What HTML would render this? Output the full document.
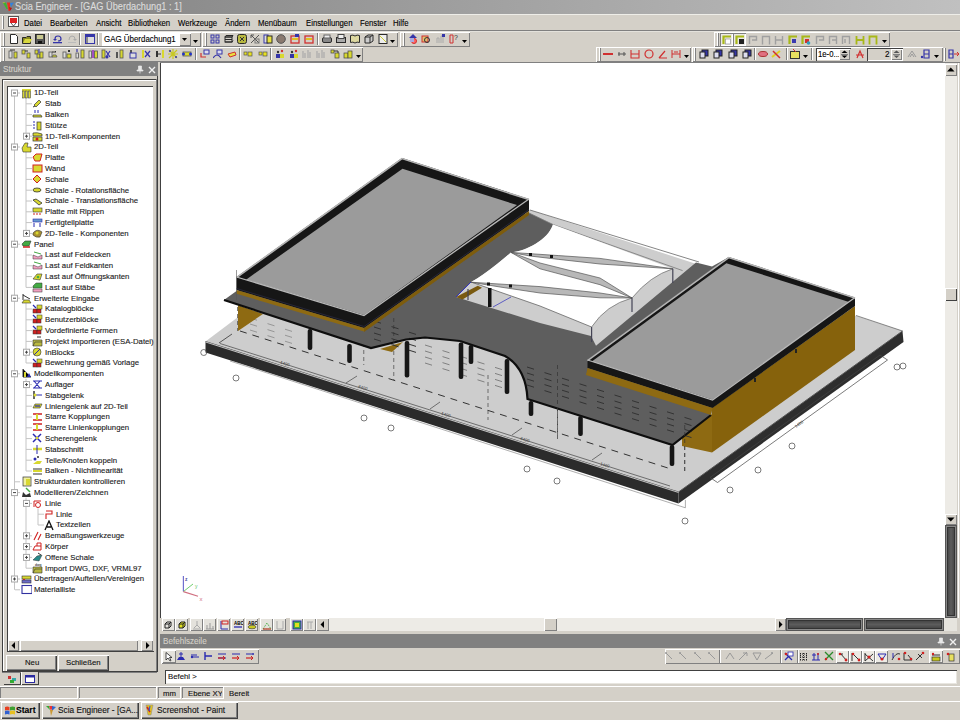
<!DOCTYPE html><html><head><meta charset="utf-8"><style>
html,body{margin:0;padding:0;}
body{width:960px;height:720px;overflow:hidden;position:relative;background:#d4d0c8;font-family:"Liberation Sans",sans-serif;}
div{position:absolute;box-sizing:border-box;}
.t{white-space:nowrap;transform-origin:0 0;line-height:1;-webkit-text-stroke:0.12px currentColor;}
svg{position:absolute;}
</style></head><body>

<div style="left:0px;top:0px;width:960px;height:14px;background:linear-gradient(90deg,#808080 0%,#9a9a9a 40%,#c0c0c0 100%)"></div>
<div class="t" style="left:15px;top:2px;font-size:10px;color:#dcdcdc;transform:scaleX(0.92);">Scia Engineer - [GAG &Uuml;berdachung1 : 1]</div>
<svg style="left:1px;top:1px" width="14" height="12"><path d="M1.5 1.5 L4 1.5 L4 4 Z" fill="#f0d020"/><path d="M2 2 L5 1.5 L7 8 L5.5 8Z" fill="#40b030"/><path d="M6 1.5 L9 1.5 L9 10 L7.5 10 Z" fill="#e83020"/><path d="M9 2 L13 1.5 L10 6Z" fill="#3080e0"/><path d="M8 6 L11 7 L9 10Z" fill="#c01010"/></svg>
<div style="left:0px;top:14px;width:960px;height:1px;background:#eeede8"></div>
<div style="left:0px;top:30px;width:960px;height:1px;background:#808080"></div>
<div style="left:0px;top:31px;width:960px;height:1px;background:#e4e2dc"></div>
<div style="left:2px;top:16px;width:1px;height:13px;background:#fff"></div>
<div style="left:3px;top:16px;width:1px;height:13px;background:#808080"></div>
<svg style="left:7px;top:15px" width="14" height="14"><rect x="1.5" y="1.5" width="10" height="10" fill="#fff" stroke="#555"/><rect x="3" y="3" width="7" height="5" fill="#d22"/><path d="M4 8 L6.5 11 L9 8" fill="#fff" stroke="#555"/></svg>
<div class="t" style="left:24px;top:18.5px;font-size:9px;color:#000;transform:scaleX(0.86);">Datei</div>
<div class="t" style="left:50px;top:18.5px;font-size:9px;color:#000;transform:scaleX(0.86);">Bearbeiten</div>
<div class="t" style="left:95.5px;top:18.5px;font-size:9px;color:#000;transform:scaleX(0.86);">Ansicht</div>
<div class="t" style="left:128px;top:18.5px;font-size:9px;color:#000;transform:scaleX(0.86);">Bibliotheken</div>
<div class="t" style="left:178px;top:18.5px;font-size:9px;color:#000;transform:scaleX(0.86);">Werkzeuge</div>
<div class="t" style="left:225px;top:18.5px;font-size:9px;color:#000;transform:scaleX(0.86);">&Auml;ndern</div>
<div class="t" style="left:258px;top:18.5px;font-size:9px;color:#000;transform:scaleX(0.86);">Men&uuml;baum</div>
<div class="t" style="left:306px;top:18.5px;font-size:9px;color:#000;transform:scaleX(0.86);">Einstellungen</div>
<div class="t" style="left:360px;top:18.5px;font-size:9px;color:#000;transform:scaleX(0.86);">Fenster</div>
<div class="t" style="left:393px;top:18.5px;font-size:9px;color:#000;transform:scaleX(0.86);">Hilfe</div>
<div style="left:0px;top:32px;width:201px;height:15px;box-shadow:inset 1px 1px 0 #fff, inset -1px -1px 0 #808080"></div>
<div style="left:3px;top:33px;width:1px;height:13px;background:#fff"></div>
<div style="left:4px;top:33px;width:1px;height:13px;background:#808080"></div>
<svg style="left:9px;top:34px" width="10" height="10" viewBox="0 0 10 10"><path d="M1.5 .5 H6.5 L8.5 2.5 V9.5 H1.5Z" fill="#fff" stroke="#2a2a2a"/></svg>
<svg style="left:22px;top:34px" width="10" height="10" viewBox="0 0 10 10"><path d="M.5 3.5 H4 L5 2.5 H8.5 V9.5 H.5Z" fill="#8a8a20" stroke="#2a2a2a"/><path d="M1 9 L3 5 H10 L8 9Z" fill="#d8d840"/></svg>
<svg style="left:35px;top:34px" width="10" height="10" viewBox="0 0 10 10"><rect x=".5" y=".5" width="9" height="9" fill="#555" stroke="#2a2a2a"/><rect x="2" y="1" width="6" height="4" fill="#c8c890"/><rect x="3" y="7" width="4" height="2.5" fill="#111"/></svg>
<svg style="left:53px;top:34px" width="10" height="10" viewBox="0 0 10 10"><path d="M2 5 Q2 2 5 2 Q8 2 8 5 Q8 7 5 7" fill="none" stroke="#3535a8" stroke-width="1.2"/><path d="M0 5 H4 L2 7Z" fill="#3535a8"/><rect x="0" y="8" width="9" height="1.3" fill="#3535a8"/></svg>
<svg style="left:67px;top:34px" width="10" height="10" viewBox="0 0 10 10"><path d="M2 6 Q2 2 5 2 Q8 2 8 5" fill="none" stroke="#aaa" stroke-width="1"/><path d="M6 5 H10 L8 7Z" fill="#aaa"/><rect x="1" y="8" width="8" height="1" fill="#bbb"/></svg>
<svg style="left:85px;top:34px" width="10" height="10" viewBox="0 0 10 10"><rect x=".5" y=".5" width="9" height="9" fill="#ddd" stroke="#3535a8"/><rect x="1" y="1" width="8" height="2" fill="#3535a8"/><rect x="1" y="3" width="2" height="6" fill="#888"/></svg>
<div style="left:48px;top:33px;width:1px;height:12px;background:#808080"></div>
<div style="left:49px;top:33px;width:1px;height:12px;background:#fff"></div>
<div style="left:79px;top:33px;width:1px;height:12px;background:#808080"></div>
<div style="left:80px;top:33px;width:1px;height:12px;background:#fff"></div>
<div style="left:97px;top:33px;width:1px;height:12px;background:#808080"></div>
<div style="left:98px;top:33px;width:1px;height:12px;background:#fff"></div>
<div style="left:102px;top:33px;width:89px;height:13px;background:#fff"></div>
<div style="left:179px;top:33px;width:12px;height:13px;background:#d4d0c8;box-shadow:inset 1px 1px 0 #fff, inset -1px -1px 0 #808080"></div>
<svg style="left:182px;top:38px" width="6" height="4" viewBox="0 0 6 4"><path d="M0 0 H5 L2.5 3Z" fill="#000"/></svg>
<div class="t" style="left:104px;top:35px;font-size:9px;color:#000;transform:scaleX(0.88);">GAG &Uuml;berdachung1</div>
<svg style="left:193px;top:40px" width="6" height="4" viewBox="0 0 6 4"><path d="M0 0 H5 L2.5 3Z" fill="#000"/></svg>
<div style="left:202px;top:32px;width:196px;height:15px;box-shadow:inset 1px 1px 0 #fff, inset -1px -1px 0 #808080"></div>
<div style="left:205px;top:33px;width:1px;height:13px;background:#fff"></div>
<div style="left:206px;top:33px;width:1px;height:13px;background:#808080"></div>
<svg style="left:210px;top:34px" width="10" height="10" viewBox="0 0 10 10"><rect x="1" y="1" width="3" height="3" fill="none" stroke="#3535a8"/><rect x="6" y="1" width="3" height="3" fill="none" stroke="#3535a8"/><rect x="1" y="6" width="3" height="3" fill="none" stroke="#3535a8"/><rect x="6" y="6" width="3" height="3" fill="none" stroke="#3535a8"/></svg>
<svg style="left:224px;top:34px" width="10" height="10" viewBox="0 0 10 10"><path d="M1 3 H8 L9 1.5 H2Z M1 5.5 H8 M1 8 H8 L9 6.5" fill="none" stroke="#2a2a2a"/><rect x="1" y="3" width="7" height="5" fill="none" stroke="#2a2a2a"/></svg>
<svg style="left:237px;top:34px" width="10" height="10" viewBox="0 0 10 10"><rect x=".5" y=".5" width="9" height="9" rx="2" fill="#b8b840" stroke="#2a2a2a"/><path d="M3 3 L7 7 M7 3 L3 7" stroke="#333"/></svg>
<svg style="left:250px;top:34px" width="10" height="10" viewBox="0 0 10 10"><path d="M1 1 L9 9 M9 1 L1 9 M1 1 H4 M1 1 V4" fill="none" stroke="#555"/><rect x="5" y="5" width="4" height="4" fill="none" stroke="#777"/></svg>
<svg style="left:263px;top:34px" width="10" height="10" viewBox="0 0 10 10"><rect x="1" y="1" width="4" height="8" fill="#ddd" stroke="#3535a8"/><rect x="4" y="2" width="5" height="7" fill="#e8e040" stroke="#2a2a2a"/></svg>
<svg style="left:276px;top:34px" width="10" height="10" viewBox="0 0 10 10"><circle cx="5" cy="5" r="4.3" fill="#8a7a70" stroke="#555"/></svg>
<svg style="left:290px;top:34px" width="10" height="10" viewBox="0 0 10 10"><rect x="1" y="2" width="8" height="7" fill="none" stroke="#d03030" stroke-width="1.3"/><rect x="2" y="4" width="6" height="2" fill="#e0c020"/><rect x="5" y="0" width="4" height="3" fill="#3535a8"/></svg>
<svg style="left:304px;top:34px" width="10" height="10" viewBox="0 0 10 10"><rect x="1" y="2" width="8" height="7" fill="none" stroke="#d03030" stroke-width="1.3"/><rect x="2" y="4" width="6" height="2" fill="#e0c020"/></svg>
<svg style="left:322px;top:34px" width="10" height="10" viewBox="0 0 10 10"><rect x=".5" y="3.5" width="9" height="5" rx="1.5" fill="#888" stroke="#2a2a2a"/><rect x="2" y="1" width="6" height="3" fill="#eee" stroke="#666"/></svg>
<svg style="left:336px;top:34px" width="10" height="10" viewBox="0 0 10 10"><rect x=".5" y="3.5" width="9" height="5" fill="#aaa" stroke="#2a2a2a"/><rect x="2" y=".5" width="6" height="4" fill="#eee" stroke="#444"/></svg>
<svg style="left:350px;top:34px" width="10" height="10" viewBox="0 0 10 10"><path d="M.5 1.5 Q3 .5 5 2 Q7 .5 9.5 1.5 V8.5 Q7 7.5 5 9 Q3 7.5 .5 8.5Z" fill="#ddd8a0" stroke="#2a2a2a"/></svg>
<svg style="left:364px;top:34px" width="10" height="10" viewBox="0 0 10 10"><path d="M1 3 L4 1 H9 V7 L6 9 H1Z" fill="#ccc" stroke="#2a2a2a"/><path d="M1 3 H6 V9 M6 3 L9 1" fill="none" stroke="#2a2a2a"/></svg>
<svg style="left:378px;top:34px" width="10" height="10" viewBox="0 0 10 10"><rect x="1" y=".5" width="8" height="9" fill="#eee" stroke="#2a2a2a"/><path d="M2 2 L8 8" stroke="#cc3"/></svg>
<div style="left:317px;top:33px;width:1px;height:12px;background:#808080"></div>
<div style="left:318px;top:33px;width:1px;height:12px;background:#fff"></div>
<svg style="left:390px;top:40px" width="6" height="4" viewBox="0 0 6 4"><path d="M0 0 H5 L2.5 3Z" fill="#000"/></svg>
<div style="left:400px;top:32px;width:70px;height:15px;box-shadow:inset 1px 1px 0 #fff, inset -1px -1px 0 #808080"></div>
<div style="left:403px;top:33px;width:1px;height:13px;background:#fff"></div>
<div style="left:404px;top:33px;width:1px;height:13px;background:#808080"></div>
<svg style="left:408px;top:34px" width="10" height="10" viewBox="0 0 10 10"><path d="M5 0 L9 4 H1Z" fill="#3535a8"/><circle cx="6" cy="7" r="2.5" fill="#f66" stroke="#d03030"/><rect x="2" y="4" width="4" height="4" fill="#aad"/></svg>
<svg style="left:421px;top:34px" width="10" height="10" viewBox="0 0 10 10"><rect x="1" y="2" width="6" height="6" fill="#e0c070" stroke="#d03030"/><circle cx="6" cy="6" r="2.5" fill="none" stroke="#333"/></svg>
<svg style="left:436px;top:34px" width="10" height="10" viewBox="0 0 10 10"><path d="M1 9 V4 H3 V9 M5 9 V2 H7 V9" fill="none" stroke="#aaa"/><rect x="6" y="0" width="3" height="3" fill="#3535a8"/></svg>
<svg style="left:449px;top:34px" width="10" height="10" viewBox="0 0 10 10"><path d="M1 1 V9 H4 V1Z" fill="none" stroke="#d03030"/><text x="5" y="6" font-size="7" fill="#333" font-family="Liberation Sans">?</text></svg>
<svg style="left:462px;top:40px" width="6" height="4" viewBox="0 0 6 4"><path d="M0 0 H5 L2.5 3Z" fill="#000"/></svg>
<div style="left:714px;top:32px;width:176px;height:15px;box-shadow:inset 1px 1px 0 #fff, inset -1px -1px 0 #808080"></div>
<div style="left:717px;top:33px;width:1px;height:13px;background:#fff"></div>
<div style="left:718px;top:33px;width:1px;height:13px;background:#808080"></div>
<div style="left:720px;top:33px;width:13px;height:13px;background:#eceae4;box-shadow:inset 1px 1px 0 #808080, inset -1px -1px 0 #fff"></div>
<div style="left:733px;top:33px;width:13px;height:13px;background:#eceae4;box-shadow:inset 1px 1px 0 #808080, inset -1px -1px 0 #fff"></div>
<svg style="left:721.5px;top:34.5px" width="10" height="10" viewBox="0 0 10 10"><path d="M1.5 9 V1.5 H9" fill="none" stroke="#a8b818" stroke-width="2.2"/><rect x="3.5" y="4" width="5" height="5" fill="#fff" stroke="#888" stroke-width=".6"/></svg>
<svg style="left:734.5px;top:34.5px" width="10" height="10" viewBox="0 0 10 10"><path d="M1.5 9 V1.5 H9" fill="none" stroke="#a8b818" stroke-width="2.2"/><rect x="4" y="4" width="5" height="5" fill="#222"/></svg>
<svg style="left:748px;top:34.5px" width="10" height="10" viewBox="0 0 10 10"><path d="M1.5 9 V1.5 H8.5 V5 H4" fill="none" stroke="#a0a0a0" stroke-width="1.4"/></svg>
<svg style="left:761px;top:34.5px" width="10" height="10" viewBox="0 0 10 10"><path d="M1.5 9.5 V1.5 H8.5 V9.5" fill="none" stroke="#a0a0a0" stroke-width="1.4"/></svg>
<svg style="left:774px;top:34.5px" width="10" height="10" viewBox="0 0 10 10"><path d="M1.5 9.5 V1 M8.5 9.5 V1 M1.5 5 H8.5" fill="none" stroke="#a0a0a0" stroke-width="1.4"/></svg>
<svg style="left:787.5px;top:34.5px" width="10" height="10" viewBox="0 0 10 10"><path d="M1.5 9 V1.5 H9" fill="none" stroke="#a8b818" stroke-width="2.2"/><rect x="4" y="4" width="4" height="4" fill="#3a3ab0"/></svg>
<svg style="left:801px;top:34.5px" width="10" height="10" viewBox="0 0 10 10"><path d="M1.5 9 V1.5 H9" fill="none" stroke="#a8b818" stroke-width="2.2"/><rect x="4" y="4" width="4" height="4" fill="#d03030"/><circle cx="7.5" cy="8" r="1.8" fill="#30a0c0"/></svg>
<svg style="left:814.5px;top:34.5px" width="10" height="10" viewBox="0 0 10 10"><path d="M1.5 9 V1.5 H8.5 V5 H4" fill="none" stroke="#a0a0a0" stroke-width="1.4"/></svg>
<svg style="left:828px;top:34.5px" width="10" height="10" viewBox="0 0 10 10"><path d="M1.5 9 V1.5 H8.5 V9 M4 5 H8" fill="none" stroke="#a0a0a0" stroke-width="1.4"/></svg>
<svg style="left:841px;top:34.5px" width="10" height="10" viewBox="0 0 10 10"><path d="M1.5 9 V1.5 H8.5 V9 M4 4 V8" fill="none" stroke="#a0a0a0" stroke-width="1.4"/></svg>
<svg style="left:854.5px;top:34.5px" width="10" height="10" viewBox="0 0 10 10"><path d="M1.5 9.5 V1 M8.5 9.5 V1 M1.5 5 H8.5" fill="none" stroke="#a8b818" stroke-width="1.8"/></svg>
<svg style="left:868px;top:34.5px" width="10" height="10" viewBox="0 0 10 10"><path d="M1.5 9.5 V1.5 H8.5 V9.5" fill="none" stroke="#a8b818" stroke-width="1.8"/></svg>
<svg style="left:882px;top:40px" width="6" height="4" viewBox="0 0 6 4"><path d="M0 0 H5 L2.5 3Z" fill="#000"/></svg>
<div style="left:0px;top:47px;width:363px;height:15px;box-shadow:inset 1px 1px 0 #fff, inset -1px -1px 0 #808080"></div>
<div style="left:3px;top:48px;width:1px;height:13px;background:#fff"></div>
<div style="left:4px;top:48px;width:1px;height:13px;background:#808080"></div>
<svg style="left:8px;top:49px" width="10" height="10" viewBox="0 0 10 10"><rect x="1" y="2" width="3" height="7" fill="#ddd" stroke="#555" stroke-width=".8"/><rect x="6" y="3" width="3" height="6" fill="#d8d830" stroke="#555" stroke-width=".8"/><path d="M2 1 H7" stroke="#333"/></svg>
<svg style="left:21px;top:49px" width="10" height="10" viewBox="0 0 10 10"><rect x="1" y="1" width="3" height="4" fill="#d8d830" stroke="#555" stroke-width=".8"/><rect x="6" y="4" width="3" height="5" fill="#d8d830" stroke="#555" stroke-width=".8"/><path d="M4 2 H7" stroke="#333"/></svg>
<svg style="left:34px;top:49px" width="10" height="10" viewBox="0 0 10 10"><rect x="1" y="1" width="3" height="4" fill="#d8d830" stroke="#555" stroke-width=".8"/><rect x="3" y="5" width="3" height="4" fill="#d8d830" stroke="#555" stroke-width=".8"/><rect x="6" y="3" width="3" height="6" fill="#d8d830" stroke="#555" stroke-width=".8"/><path d="M5 0 V4" stroke="#3535a8"/></svg>
<svg style="left:48px;top:49px" width="10" height="10" viewBox="0 0 10 10"><rect x="1" y="3" width="3" height="5" fill="#ddd" stroke="#555" stroke-width=".8"/><path d="M4 8 H9 L8 6 H5Z" fill="#d8d830" stroke="#555" stroke-width=".8"/><path d="M4 3 H8 L7 2" fill="none" stroke="#333"/></svg>
<svg style="left:62px;top:49px" width="10" height="10" viewBox="0 0 10 10"><rect x="1" y="3" width="3" height="6" fill="#ddd" stroke="#555" stroke-width=".8"/><rect x="5" y="5" width="4" height="4" fill="#d8d830" stroke="#555" stroke-width=".8"/><path d="M6 1 L8 3 M8 1 L6 3" stroke="#333"/></svg>
<svg style="left:75px;top:49px" width="10" height="10" viewBox="0 0 10 10"><rect x="1" y="4" width="2.5" height="5" fill="#ddd" stroke="#555" stroke-width=".8"/><rect x="6" y="1" width="3" height="8" fill="#d8d830" stroke="#555" stroke-width=".8"/><path d="M2 0 V3" stroke="#3535a8" stroke-width="1.2"/></svg>
<svg style="left:88px;top:49px" width="10" height="10" viewBox="0 0 10 10"><rect x="1" y="2" width="2.5" height="7" fill="#ddd" stroke="#555" stroke-width=".8"/><rect x="4" y="1" width="2" height="8" fill="#a050c0"/><rect x="6.5" y="2" width="3" height="7" fill="#d8d830" stroke="#555" stroke-width=".8"/></svg>
<svg style="left:101px;top:49px" width="10" height="10" viewBox="0 0 10 10"><rect x="1" y="1" width="3" height="8" fill="#d8d830" stroke="#555" stroke-width=".8"/><path d="M5 2 L9 8 M9 2 L5 8" stroke="#3535a8" stroke-width="1.2"/><circle cx="6" cy="8" r="1.5" fill="#3535a8"/></svg>
<svg style="left:115px;top:49px" width="10" height="10" viewBox="0 0 10 10"><rect x="1" y="3" width="2" height="6" fill="#555"/><rect x="5" y="1" width="3" height="8" fill="#d8d830" stroke="#555" stroke-width=".8"/></svg>
<svg style="left:128px;top:49px" width="10" height="10" viewBox="0 0 10 10"><rect x="2" y="1" width="2" height="3" fill="#555"/><rect x="2" y="4" width="6" height="5" fill="#ddd" stroke="#3535a8"/></svg>
<svg style="left:141px;top:49px" width="10" height="10" viewBox="0 0 10 10"><rect x="1" y="1" width="2" height="8" fill="#d8d830"/><path d="M4 2 L9 8 M9 2 L4 8" stroke="#3535a8" stroke-width="1.2"/></svg>
<svg style="left:155px;top:49px" width="10" height="10" viewBox="0 0 10 10"><rect x="1" y="2" width="2" height="6" fill="#333"/><path d="M3 5 H6" stroke="#333"/><rect x="7" y="1" width="2" height="8" fill="#d8d830"/></svg>
<svg style="left:168px;top:49px" width="10" height="10" viewBox="0 0 10 10"><path d="M5 0 V10 M0 5 H10 M1 1 L9 9 M9 1 L1 9" stroke="#c8c820" stroke-width="1.2"/><circle cx="2" cy="2" r="1" fill="#3535a8"/><circle cx="8" cy="8" r="1" fill="#3535a8"/></svg>
<svg style="left:182px;top:49px" width="10" height="10" viewBox="0 0 10 10"><rect x="1" y="3" width="8" height="4" fill="#d8d830" stroke="#555" stroke-width=".8"/><circle cx="1.5" cy="5" r="1.5" fill="#2233cc"/><circle cx="8.5" cy="5" r="1.5" fill="#2233cc"/></svg>
<svg style="left:200px;top:49px" width="10" height="10" viewBox="0 0 10 10"><rect x="4" y="1" width="5" height="4" fill="#dde" stroke="#3535a8"/><path d="M1 4 V8 H6" fill="none" stroke="#d03030" stroke-width="1.2"/></svg>
<svg style="left:213px;top:49px" width="10" height="10" viewBox="0 0 10 10"><rect x="4" y="1" width="5" height="4" fill="#dde" stroke="#3535a8"/><path d="M0 9 Q4 3 8 9" fill="none" stroke="#3535a8" stroke-width="1.2"/></svg>
<svg style="left:227px;top:49px" width="10" height="10" viewBox="0 0 10 10"><path d="M1 5 L8 3 L9 6 L3 8Z" fill="#e8e040" stroke="#d03030"/></svg>
<svg style="left:243px;top:49px" width="10" height="10" viewBox="0 0 10 10"><rect x="1" y="3" width="3" height="3" fill="#e8e020" stroke="#555" stroke-width=".7"/><rect x="5" y="3" width="4" height="4" fill="#e8e020" stroke="#555" stroke-width=".7"/></svg>
<svg style="left:258px;top:49px" width="10" height="10" viewBox="0 0 10 10"><rect x="1" y="3" width="3" height="3" fill="#e8e020" stroke="#555" stroke-width=".7"/><rect x="5" y="3" width="4" height="4" fill="#e8e020" stroke="#555" stroke-width=".7"/></svg>
<svg style="left:275px;top:49px" width="10" height="10" viewBox="0 0 10 10"><circle cx="3" cy="3" r="1.2" fill="#333"/><circle cx="7" cy="2" r="1.2" fill="#d03030"/><rect x="1" y="5" width="4" height="4" fill="#3535a8"/><rect x="5" y="5" width="4" height="4" fill="#d8d830"/></svg>
<svg style="left:289px;top:49px" width="10" height="10" viewBox="0 0 10 10"><circle cx="3" cy="3" r="1.2" fill="#333"/><circle cx="7" cy="2" r="1.2" fill="#d03030"/><rect x="1" y="5" width="4" height="4" fill="#3535a8"/><rect x="5" y="5" width="4" height="4" fill="#d8d830"/></svg>
<svg style="left:302px;top:49px" width="10" height="10" viewBox="0 0 10 10"><path d="M1 2 V9 M3 4 V9 M6 1 V9 M8 3 V9" stroke="#aaa" stroke-width="1.2"/></svg>
<svg style="left:316px;top:49px" width="10" height="10" viewBox="0 0 10 10"><path d="M1 2 V9 M3 4 V9 M6 1 V9 M8 3 V9" stroke="#aaa" stroke-width="1.2"/></svg>
<svg style="left:330px;top:49px" width="10" height="10" viewBox="0 0 10 10"><rect x="1" y="1" width="3" height="3" fill="#d8d830" stroke="#444" stroke-width=".7"/><rect x="5" y="4" width="4" height="5" fill="#d8d830" stroke="#444" stroke-width=".7"/><path d="M4 2 H8 V4" fill="none" stroke="#333"/></svg>
<svg style="left:343px;top:49px" width="10" height="10" viewBox="0 0 10 10"><rect x="1" y="4" width="4" height="5" fill="#d8d830" stroke="#444" stroke-width=".7"/><rect x="5" y="2" width="4" height="7" fill="#d8d830" stroke="#444" stroke-width=".7"/></svg>
<div style="left:195px;top:48px;width:1px;height:12px;background:#808080"></div>
<div style="left:196px;top:48px;width:1px;height:12px;background:#fff"></div>
<div style="left:239px;top:48px;width:1px;height:12px;background:#808080"></div>
<div style="left:240px;top:48px;width:1px;height:12px;background:#fff"></div>
<div style="left:270px;top:48px;width:1px;height:12px;background:#808080"></div>
<div style="left:271px;top:48px;width:1px;height:12px;background:#fff"></div>
<svg style="left:356px;top:55px" width="6" height="4" viewBox="0 0 6 4"><path d="M0 0 H5 L2.5 3Z" fill="#000"/></svg>
<div style="left:596px;top:47px;width:95px;height:15px;box-shadow:inset 1px 1px 0 #fff, inset -1px -1px 0 #808080"></div>
<div style="left:599px;top:48px;width:1px;height:13px;background:#fff"></div>
<div style="left:600px;top:48px;width:1px;height:13px;background:#808080"></div>
<svg style="left:603px;top:49px" width="10" height="10" viewBox="0 0 10 10"><rect x="0" y="4" width="10" height="2" fill="#d03030"/></svg>
<svg style="left:617px;top:49px" width="10" height="10" viewBox="0 0 10 10"><path d="M1 5 H9 M2 3 V7 M7 3 V7" stroke="#555"/></svg>
<svg style="left:630px;top:49px" width="10" height="10" viewBox="0 0 10 10"><path d="M1 1 V9 H9 V1 M1 5 H9" fill="none" stroke="#d03030" stroke-width="1.1"/></svg>
<svg style="left:644px;top:49px" width="10" height="10" viewBox="0 0 10 10"><circle cx="5" cy="5" r="4" fill="none" stroke="#d03030" stroke-width="1.2"/></svg>
<svg style="left:658px;top:49px" width="10" height="10" viewBox="0 0 10 10"><path d="M1 9 H9 M1 9 L7 2" fill="none" stroke="#d03030" stroke-width="1.2"/></svg>
<svg style="left:671px;top:49px" width="10" height="10" viewBox="0 0 10 10"><path d="M1 1 V9 M9 1 V9 M1 5 H9 M3 3 H7" fill="none" stroke="#d03030"/></svg>
<svg style="left:684px;top:55px" width="6" height="4" viewBox="0 0 6 4"><path d="M0 0 H5 L2.5 3Z" fill="#000"/></svg>
<div style="left:692px;top:47px;width:251px;height:15px;box-shadow:inset 1px 1px 0 #fff, inset -1px -1px 0 #808080"></div>
<div style="left:694px;top:48px;width:1px;height:13px;background:#fff"></div>
<div style="left:695px;top:48px;width:1px;height:13px;background:#808080"></div>
<svg style="left:699px;top:49px" width="10" height="10" viewBox="0 0 10 10"><rect x="3" y="1" width="6" height="6" fill="#3535a8" stroke="#222"/><rect x="1" y="3" width="5" height="6" fill="#dde" stroke="#222"/></svg>
<svg style="left:713px;top:49px" width="10" height="10" viewBox="0 0 10 10"><rect x="3" y="1" width="6" height="6" fill="#3535a8" stroke="#222"/><rect x="1" y="3" width="5" height="6" fill="#dde" stroke="#222"/></svg>
<svg style="left:728px;top:49px" width="10" height="10" viewBox="0 0 10 10"><rect x="3" y="1" width="6" height="6" fill="#3535a8" stroke="#222"/><rect x="1" y="3" width="5" height="6" fill="#dde" stroke="#222"/></svg>
<svg style="left:742px;top:49px" width="10" height="10" viewBox="0 0 10 10"><rect x="3" y="1" width="6" height="6" fill="#3535a8" stroke="#222"/><rect x="1" y="3" width="5" height="6" fill="#dde" stroke="#222"/></svg>
<svg style="left:758px;top:49px" width="10" height="10" viewBox="0 0 10 10"><ellipse cx="5" cy="5" rx="4.5" ry="2.5" fill="#e07080" stroke="#a33"/></svg>
<svg style="left:771px;top:49px" width="10" height="10" viewBox="0 0 10 10"><path d="M1 8 L9 2" stroke="#e0d020" stroke-width="2"/><path d="M2 2 L9 9" stroke="#d03030" stroke-width="1.5"/></svg>
<svg style="left:790px;top:49px" width="10" height="10" viewBox="0 0 10 10"><rect x=".5" y="2.5" width="9" height="7" fill="#e8e060" stroke="#333"/><path d="M3 0 L6 3" stroke="#d03030"/></svg>
<div style="left:754px;top:48px;width:1px;height:12px;background:#808080"></div>
<div style="left:755px;top:48px;width:1px;height:12px;background:#fff"></div>
<div style="left:786px;top:48px;width:1px;height:12px;background:#808080"></div>
<div style="left:787px;top:48px;width:1px;height:12px;background:#fff"></div>
<div style="left:811px;top:48px;width:1px;height:12px;background:#808080"></div>
<div style="left:812px;top:48px;width:1px;height:12px;background:#fff"></div>
<svg style="left:803px;top:55px" width="6" height="4" viewBox="0 0 6 4"><path d="M0 0 H5 L2.5 3Z" fill="#000"/></svg>
<div style="left:816px;top:48px;width:35px;height:13px;background:#fff;box-shadow:inset 1px 1px 0 #404040, inset -1px -1px 0 #d4d0c8"></div>
<div class="t" style="left:818px;top:50px;font-size:9px;color:#000;transform:scaleX(0.86);">1e-0...</div>
<div style="left:839px;top:49px;width:11px;height:11px;background:#d4d0c8;box-shadow:inset 1px 1px 0 #fff, inset -1px -1px 0 #808080"></div>
<svg style="left:841px;top:50px" width="7" height="9" viewBox="0 0 7 9"><path d="M.5 3 L3.5 .5 L6.5 3Z M.5 5.5 L3.5 8 L6.5 5.5Z" fill="#000"/><rect x="0" y="4" width="7" height="1" fill="#808080"/></svg>
<svg style="left:855px;top:49px" width="10" height="10" viewBox="0 0 10 10"><path d="M2 9 L5 2 L8 9 M1 6 H9" fill="none" stroke="#d03030" stroke-width="1.2"/></svg>
<div style="left:867px;top:48px;width:36px;height:13px;background:#d4d0c8;box-shadow:inset 1px 1px 0 #404040, inset -1px -1px 0 #fff"></div>
<div class="t" style="left:885px;top:50px;font-size:9px;color:#000;transform:scaleX(0.9);">2</div>
<div style="left:891px;top:49px;width:11px;height:11px;background:#d4d0c8;box-shadow:inset 1px 1px 0 #fff, inset -1px -1px 0 #808080"></div>
<svg style="left:893px;top:50px" width="7" height="9" viewBox="0 0 7 9"><path d="M.5 3 L3.5 .5 L6.5 3Z M.5 5.5 L3.5 8 L6.5 5.5Z" fill="#555"/><rect x="0" y="4" width="7" height="1" fill="#808080"/></svg>
<svg style="left:907px;top:49px" width="10" height="10" viewBox="0 0 10 10"><path d="M1 8 L5 2 L9 8 M3 8 L5 5 L7 8" fill="none" stroke="#999"/></svg>
<svg style="left:920px;top:49px" width="10" height="10" viewBox="0 0 10 10"><path d="M4 1 H9 V9 H4Z M4 5 H9" fill="none" stroke="#3535a8" stroke-width="1.2"/><circle cx="2" cy="8" r="1.2" fill="#3535a8"/></svg>
<svg style="left:934px;top:55px" width="6" height="4" viewBox="0 0 6 4"><path d="M0 0 H5 L2.5 3Z" fill="#000"/></svg>
<div style="left:944px;top:48px;width:1px;height:13px;background:#fff"></div>
<div style="left:945px;top:48px;width:1px;height:13px;background:#808080"></div>
<svg style="left:948px;top:49px" width="12" height="10" viewBox="0 0 12 10"><path d="M1 1 H5 V9 H1Z M1 5 H5" fill="none" stroke="#3535a8" stroke-width="1.2"/><path d="M6 5 H11 M9 3 L11 5 L9 7" fill="none" stroke="#d03030"/></svg>
<div style="left:0px;top:62px;width:960px;height:1px;background:#808080"></div>
<div style="left:0px;top:62px;width:158px;height:14px;background:#808080"></div>
<div class="t" style="left:3px;top:65px;font-size:9px;color:#d4d0c8;transform:scaleX(0.9);">Struktur</div>
<svg style="left:136px;top:65px" width="8" height="9" viewBox="0 0 8 9"><path d="M2.5 1 H5.5 V5 H7 V6 H1 V5 H2.5Z M4 6 V8.5" fill="#e8e8e8" stroke="#e8e8e8" stroke-width=".7"/></svg>
<svg style="left:148px;top:66px" width="8" height="8" viewBox="0 0 8 8"><path d="M1 1 L7 7 M7 1 L1 7" stroke="#f0f0f0" stroke-width="1.4"/></svg>
<div style="left:157px;top:76px;width:1px;height:596px;background:#404040"></div>
<div style="left:158px;top:62px;width:2px;height:610px;background:#d4d0c8"></div>
<div style="left:2px;top:79px;width:154px;height:593px;box-shadow:inset 1px 1px 0 #404040, inset 2px 2px 0 #fff"></div>
<div style="left:156px;top:79px;width:1px;height:593px;background:#808080"></div>
<div style="left:2px;top:671px;width:155px;height:1px;background:#404040"></div>
<div style="left:7px;top:86px;width:147px;height:566px;background:#fff;box-shadow:inset 1px 1px 0 #404040"></div>
<div style="left:153px;top:86px;width:1px;height:566px;background:#d4d0c8"></div>
<svg style="left:0;top:0" width="160" height="680">
<path d="M14.5 96.0 V589.8" stroke="#c4c4c4" stroke-width="1"/>
<path d="M15 93.0 H20" stroke="#c4c4c4"/>
<path d="M15 147.0 H20" stroke="#c4c4c4"/>
<path d="M15 244.2 H20" stroke="#c4c4c4"/>
<path d="M15 298.2 H20" stroke="#c4c4c4"/>
<path d="M15 373.8 H20" stroke="#c4c4c4"/>
<path d="M15 481.8 H20" stroke="#c4c4c4"/>
<path d="M15 492.6 H20" stroke="#c4c4c4"/>
<path d="M15 579.0 H20" stroke="#c4c4c4"/>
<path d="M15 589.8 H20" stroke="#c4c4c4"/>
<path d="M26 98.0 V136.2" stroke="#c4c4c4"/>
<path d="M26 152.0 V233.4" stroke="#c4c4c4"/>
<path d="M26 249.2 V287.4" stroke="#c4c4c4"/>
<path d="M26 303.2 V363.0" stroke="#c4c4c4"/>
<path d="M26 378.8 V471.0" stroke="#c4c4c4"/>
<path d="M26 497.6 V568.2" stroke="#c4c4c4"/>
<path d="M38 508.4 V525.0" stroke="#c4c4c4"/>
<path d="M26 103.8 H32" stroke="#c4c4c4"/>
<path d="M26 114.6 H32" stroke="#c4c4c4"/>
<path d="M26 125.4 H32" stroke="#c4c4c4"/>
<path d="M26 136.2 H32" stroke="#c4c4c4"/>
<path d="M26 157.8 H32" stroke="#c4c4c4"/>
<path d="M26 168.6 H32" stroke="#c4c4c4"/>
<path d="M26 179.4 H32" stroke="#c4c4c4"/>
<path d="M26 190.2 H32" stroke="#c4c4c4"/>
<path d="M26 201.0 H32" stroke="#c4c4c4"/>
<path d="M26 211.8 H32" stroke="#c4c4c4"/>
<path d="M26 222.6 H32" stroke="#c4c4c4"/>
<path d="M26 233.4 H32" stroke="#c4c4c4"/>
<path d="M26 255.0 H32" stroke="#c4c4c4"/>
<path d="M26 265.8 H32" stroke="#c4c4c4"/>
<path d="M26 276.6 H32" stroke="#c4c4c4"/>
<path d="M26 287.4 H32" stroke="#c4c4c4"/>
<path d="M26 309.0 H32" stroke="#c4c4c4"/>
<path d="M26 319.8 H32" stroke="#c4c4c4"/>
<path d="M26 330.6 H32" stroke="#c4c4c4"/>
<path d="M26 341.4 H32" stroke="#c4c4c4"/>
<path d="M26 352.2 H32" stroke="#c4c4c4"/>
<path d="M26 363.0 H32" stroke="#c4c4c4"/>
<path d="M26 384.6 H32" stroke="#c4c4c4"/>
<path d="M26 395.4 H32" stroke="#c4c4c4"/>
<path d="M26 406.2 H32" stroke="#c4c4c4"/>
<path d="M26 417.0 H32" stroke="#c4c4c4"/>
<path d="M26 427.8 H32" stroke="#c4c4c4"/>
<path d="M26 438.6 H32" stroke="#c4c4c4"/>
<path d="M26 449.4 H32" stroke="#c4c4c4"/>
<path d="M26 460.2 H32" stroke="#c4c4c4"/>
<path d="M26 471.0 H32" stroke="#c4c4c4"/>
<path d="M26 503.4 H32" stroke="#c4c4c4"/>
<path d="M38 514.2 H44" stroke="#c4c4c4"/>
<path d="M38 525.0 H44" stroke="#c4c4c4"/>
<path d="M26 535.8 H32" stroke="#c4c4c4"/>
<path d="M26 546.6 H32" stroke="#c4c4c4"/>
<path d="M26 557.4 H32" stroke="#c4c4c4"/>
<path d="M26 568.2 H32" stroke="#c4c4c4"/>
<rect x="11.5" y="90.0" width="6" height="6" fill="#fff" stroke="#a8a8a8"/>
<path d="M13.0 93.0 H16.0" stroke="#444"/>
<rect x="23.5" y="133.2" width="6" height="6" fill="#fff" stroke="#a8a8a8"/>
<path d="M25.0 136.2 H28.0" stroke="#444"/>
<path d="M26.5 134.7 V137.7" stroke="#444"/>
<rect x="11.5" y="144.0" width="6" height="6" fill="#fff" stroke="#a8a8a8"/>
<path d="M13.0 147.0 H16.0" stroke="#444"/>
<rect x="23.5" y="230.4" width="6" height="6" fill="#fff" stroke="#a8a8a8"/>
<path d="M25.0 233.4 H28.0" stroke="#444"/>
<path d="M26.5 231.9 V234.9" stroke="#444"/>
<rect x="11.5" y="241.2" width="6" height="6" fill="#fff" stroke="#a8a8a8"/>
<path d="M13.0 244.2 H16.0" stroke="#444"/>
<rect x="11.5" y="295.2" width="6" height="6" fill="#fff" stroke="#a8a8a8"/>
<path d="M13.0 298.2 H16.0" stroke="#444"/>
<rect x="23.5" y="349.2" width="6" height="6" fill="#fff" stroke="#a8a8a8"/>
<path d="M25.0 352.2 H28.0" stroke="#444"/>
<path d="M26.5 350.7 V353.7" stroke="#444"/>
<rect x="11.5" y="370.8" width="6" height="6" fill="#fff" stroke="#a8a8a8"/>
<path d="M13.0 373.8 H16.0" stroke="#444"/>
<rect x="23.5" y="381.6" width="6" height="6" fill="#fff" stroke="#a8a8a8"/>
<path d="M25.0 384.6 H28.0" stroke="#444"/>
<path d="M26.5 383.1 V386.1" stroke="#444"/>
<rect x="11.5" y="489.6" width="6" height="6" fill="#fff" stroke="#a8a8a8"/>
<path d="M13.0 492.6 H16.0" stroke="#444"/>
<rect x="23.5" y="500.4" width="6" height="6" fill="#fff" stroke="#a8a8a8"/>
<path d="M25.0 503.4 H28.0" stroke="#444"/>
<rect x="23.5" y="532.8" width="6" height="6" fill="#fff" stroke="#a8a8a8"/>
<path d="M25.0 535.8 H28.0" stroke="#444"/>
<path d="M26.5 534.3 V537.3" stroke="#444"/>
<rect x="23.5" y="543.6" width="6" height="6" fill="#fff" stroke="#a8a8a8"/>
<path d="M25.0 546.6 H28.0" stroke="#444"/>
<path d="M26.5 545.1 V548.1" stroke="#444"/>
<rect x="23.5" y="554.4" width="6" height="6" fill="#fff" stroke="#a8a8a8"/>
<path d="M25.0 557.4 H28.0" stroke="#444"/>
<path d="M26.5 555.9 V558.9" stroke="#444"/>
<rect x="11.5" y="576.0" width="6" height="6" fill="#fff" stroke="#a8a8a8"/>
<path d="M13.0 579.0 H16.0" stroke="#444"/>
<path d="M14.5 577.5 V580.5" stroke="#444"/>
</svg>
<svg style="left:21px;top:88px" width="11" height="11" viewBox="0 0 11 11"><path d="M1 2 H10" stroke="#d8d830" stroke-width="2"/><rect x="1.5" y="3" width="2" height="7" fill="#d8d830" stroke="#333" stroke-width=".5"/><rect x="4.5" y="3" width="2" height="7" fill="#d8d830" stroke="#333" stroke-width=".5"/><rect x="7.5" y="3" width="2" height="7" fill="#d8d830" stroke="#333" stroke-width=".5"/></svg>
<div class="t" style="left:34px;top:89.4px;font-size:8px;color:#1a1a1a;transform:scaleX(0.97);">1D-Teil</div>
<svg style="left:32px;top:98px" width="11" height="11" viewBox="0 0 11 11"><path d="M2 7 L7 2 L9 4 L4 9Z" fill="#d8d830" stroke="#333" stroke-width=".7"/><path d="M1 9 L3 8" stroke="#333"/></svg>
<div class="t" style="left:45px;top:100.2px;font-size:8px;color:#1a1a1a;transform:scaleX(0.97);">Stab</div>
<svg style="left:32px;top:109px" width="11" height="11" viewBox="0 0 11 11"><path d="M1 6 H9 L10 8 H1Z" fill="#d8d830" stroke="#333" stroke-width=".7"/><path d="M3 1 V4 M6 1 V4" stroke="#2a2ab0"/></svg>
<div class="t" style="left:45px;top:111.0px;font-size:8px;color:#1a1a1a;transform:scaleX(0.97);">Balken</div>
<svg style="left:32px;top:120px" width="11" height="11" viewBox="0 0 11 11"><rect x="5" y="2" width="4" height="8" fill="#d8d830" stroke="#333" stroke-width=".7"/><path d="M2 1 V9" stroke="#2a2ab0" stroke-dasharray="2 1"/></svg>
<div class="t" style="left:45px;top:121.80000000000001px;font-size:8px;color:#1a1a1a;transform:scaleX(0.97);">St&uuml;tze</div>
<svg style="left:32px;top:131px" width="11" height="11" viewBox="0 0 11 11"><path d="M1 2 Q5 1 10 3 V5 H1Z" fill="#d8d830" stroke="#333" stroke-width=".7"/><rect x="1" y="6" width="9" height="4" fill="#d8d830" stroke="#333" stroke-width=".7"/><circle cx="5" cy="8" r="1.5" fill="#d02020"/></svg>
<div class="t" style="left:45px;top:132.6px;font-size:8px;color:#1a1a1a;transform:scaleX(0.97);">1D-Teil-Komponenten</div>
<svg style="left:21px;top:142px" width="11" height="11" viewBox="0 0 11 11"><path d="M1 6 L4 1 H7 L6 5 H10 V10 H2Z" fill="#d8d830" stroke="#333" stroke-width=".6"/></svg>
<div class="t" style="left:34px;top:143.4px;font-size:8px;color:#1a1a1a;transform:scaleX(0.97);">2D-Teil</div>
<svg style="left:32px;top:152px" width="11" height="11" viewBox="0 0 11 11"><path d="M1 5 L4 2 H10 L8 9 H3Z" fill="#d8d830" stroke="#d02020" stroke-width="1"/></svg>
<div class="t" style="left:45px;top:154.20000000000002px;font-size:8px;color:#1a1a1a;transform:scaleX(0.97);">Platte</div>
<svg style="left:32px;top:163px" width="11" height="11" viewBox="0 0 11 11"><rect x="1" y="2" width="9" height="7" fill="#d8d830" stroke="#d02020" stroke-width="1"/></svg>
<div class="t" style="left:45px;top:165.00000000000003px;font-size:8px;color:#1a1a1a;transform:scaleX(0.97);">Wand</div>
<svg style="left:32px;top:174px" width="11" height="11" viewBox="0 0 11 11"><path d="M5 1 L9 5 L5 9 L1 5Z" fill="#d8d830" stroke="#d02020" stroke-width="1"/></svg>
<div class="t" style="left:45px;top:175.8px;font-size:8px;color:#1a1a1a;transform:scaleX(0.97);">Schale</div>
<svg style="left:32px;top:185px" width="11" height="11" viewBox="0 0 11 11"><ellipse cx="5" cy="5" rx="4" ry="2" fill="#d8d830" stroke="#333" stroke-width=".8"/></svg>
<div class="t" style="left:45px;top:186.6px;font-size:8px;color:#1a1a1a;transform:scaleX(0.97);">Schale - Rotationsfl&auml;che</div>
<svg style="left:32px;top:196px" width="11" height="11" viewBox="0 0 11 11"><path d="M1 4 L4 3 L10 7 L7 9Z" fill="#d8d830" stroke="#333" stroke-width=".8"/></svg>
<div class="t" style="left:45px;top:197.4px;font-size:8px;color:#1a1a1a;transform:scaleX(0.97);">Schale - Translationsfl&auml;che</div>
<svg style="left:32px;top:206px" width="11" height="11" viewBox="0 0 11 11"><rect x="1" y="2" width="9" height="4" fill="#d8d830" stroke="#333" stroke-width=".6"/><path d="M1 8 H10" stroke="#d02020" stroke-width="1.2" stroke-dasharray="2 1"/></svg>
<div class="t" style="left:45px;top:208.20000000000002px;font-size:8px;color:#1a1a1a;transform:scaleX(0.97);">Platte mit Rippen</div>
<svg style="left:32px;top:217px" width="11" height="11" viewBox="0 0 11 11"><rect x="1" y="2" width="9" height="3" fill="#69c" stroke="#2a2ab0" stroke-width=".6"/><path d="M2 6 V10 M8 6 V10" stroke="#2a2ab0"/></svg>
<div class="t" style="left:45px;top:219.00000000000003px;font-size:8px;color:#1a1a1a;transform:scaleX(0.97);">Fertigteilplatte</div>
<svg style="left:32px;top:228px" width="11" height="11" viewBox="0 0 11 11"><path d="M1 5 Q5 0 10 4 L8 9 Q4 10 1 7Z" fill="#a89030" stroke="#333" stroke-width=".6"/><circle cx="5" cy="5" r="1.5" fill="#d8d830"/></svg>
<div class="t" style="left:45px;top:229.8px;font-size:8px;color:#1a1a1a;transform:scaleX(0.97);">2D-Teile - Komponenten</div>
<svg style="left:21px;top:239px" width="11" height="11" viewBox="0 0 11 11"><path d="M1 5 L4 2 H10 L8 7 H2Z" fill="#4a4" stroke="#333" stroke-width=".6"/><path d="M2 8 H9" stroke="#d02020" stroke-width="1.5"/></svg>
<div class="t" style="left:34px;top:240.60000000000002px;font-size:8px;color:#1a1a1a;transform:scaleX(0.97);">Panel</div>
<svg style="left:32px;top:250px" width="11" height="11" viewBox="0 0 11 11"><path d="M1 9 H10 V5 L6 7 L1 5Z" fill="#f0a0c0" stroke="#333" stroke-width=".5"/><path d="M2 2 L9 4" stroke="#4a4"/></svg>
<div class="t" style="left:45px;top:251.4px;font-size:8px;color:#1a1a1a;transform:scaleX(0.97);">Last auf Feldecken</div>
<svg style="left:32px;top:260px" width="11" height="11" viewBox="0 0 11 11"><path d="M1 9 H10 V5 L6 7 L1 5Z" fill="#f0a0c0" stroke="#333" stroke-width=".5"/><path d="M2 2 L9 4" stroke="#4a4"/></svg>
<div class="t" style="left:45px;top:262.2px;font-size:8px;color:#1a1a1a;transform:scaleX(0.97);">Last auf Feldkanten</div>
<svg style="left:32px;top:271px" width="11" height="11" viewBox="0 0 11 11"><path d="M1 8 L5 3 H10 L8 9Z" fill="#d8d830" stroke="#333" stroke-width=".6"/><circle cx="6" cy="6" r="1.3" fill="#4a4"/></svg>
<div class="t" style="left:45px;top:273.0px;font-size:8px;color:#1a1a1a;transform:scaleX(0.97);">Last auf &Ouml;ffnungskanten</div>
<svg style="left:32px;top:282px" width="11" height="11" viewBox="0 0 11 11"><path d="M1 4 L4 1 H10 V6 H1Z" fill="#4a4" stroke="#333" stroke-width=".5"/><rect x="1" y="7" width="9" height="3" fill="#f0a0c0" stroke="#333" stroke-width=".5"/></svg>
<div class="t" style="left:45px;top:283.79999999999995px;font-size:8px;color:#1a1a1a;transform:scaleX(0.97);">Last auf St&auml;be</div>
<svg style="left:21px;top:293px" width="11" height="11" viewBox="0 0 11 11"><path d="M1 10 H10 L8 7 H3Z" fill="#d8d830" stroke="#333" stroke-width=".6"/><path d="M2 1 V7 M2 2 L9 6" stroke="#333"/></svg>
<div class="t" style="left:34px;top:294.6px;font-size:8px;color:#1a1a1a;transform:scaleX(0.97);">Erweiterte Eingabe</div>
<svg style="left:32px;top:304px" width="11" height="11" viewBox="0 0 11 11"><rect x="1" y="5" width="4" height="4" fill="#d02020" stroke="#333" stroke-width=".5"/><rect x="5" y="5" width="4" height="4" fill="#d02020" stroke="#333" stroke-width=".5"/><rect x="5" y="1" width="5" height="4" fill="#d8d830" stroke="#333" stroke-width=".5"/><path d="M1 1 L4 4" stroke="#2a2ab0" stroke-width="1.3"/></svg>
<div class="t" style="left:45px;top:305.4px;font-size:8px;color:#1a1a1a;transform:scaleX(0.97);">Katalogbl&ouml;cke</div>
<svg style="left:32px;top:314px" width="11" height="11" viewBox="0 0 11 11"><rect x="1" y="5" width="4" height="4" fill="#d02020" stroke="#333" stroke-width=".5"/><rect x="5" y="5" width="4" height="4" fill="#d02020" stroke="#333" stroke-width=".5"/><rect x="5" y="1" width="5" height="4" fill="#d8d830" stroke="#333" stroke-width=".5"/><path d="M1 1 L4 4" stroke="#2a2ab0" stroke-width="1.3"/></svg>
<div class="t" style="left:45px;top:316.2px;font-size:8px;color:#1a1a1a;transform:scaleX(0.97);">Benutzerbl&ouml;cke</div>
<svg style="left:32px;top:325px" width="11" height="11" viewBox="0 0 11 11"><rect x="1" y="5" width="4" height="4" fill="#d02020" stroke="#333" stroke-width=".5"/><rect x="5" y="5" width="4" height="4" fill="#d02020" stroke="#333" stroke-width=".5"/><rect x="5" y="1" width="5" height="4" fill="#d8d830" stroke="#333" stroke-width=".5"/><path d="M1 1 L4 4" stroke="#2a2ab0" stroke-width="1.3"/></svg>
<div class="t" style="left:45px;top:327.0px;font-size:8px;color:#1a1a1a;transform:scaleX(0.97);">Vordefinierte Formen</div>
<svg style="left:32px;top:336px" width="11" height="11" viewBox="0 0 11 11"><path d="M1 4 H10 V10 H1Z" fill="#b8b840" stroke="#333" stroke-width=".6"/><path d="M1 10 L3 6 H10" fill="none" stroke="#333" stroke-width=".6"/><path d="M5 1 H9" stroke="#333"/></svg>
<div class="t" style="left:45px;top:337.79999999999995px;font-size:8px;color:#1a1a1a;transform:scaleX(0.97);">Projekt importieren (ESA-Datei)</div>
<svg style="left:32px;top:347px" width="11" height="11" viewBox="0 0 11 11"><circle cx="5" cy="5" r="4" fill="#d8d830" stroke="#333" stroke-width=".6"/><path d="M2 8 L8 2" stroke="#2a2ab0" stroke-width="1"/></svg>
<div class="t" style="left:45px;top:348.6px;font-size:8px;color:#1a1a1a;transform:scaleX(0.97);">InBlocks</div>
<svg style="left:32px;top:358px" width="11" height="11" viewBox="0 0 11 11"><rect x="1" y="5" width="4" height="4" fill="#d02020" stroke="#333" stroke-width=".5"/><rect x="5" y="5" width="4" height="4" fill="#d02020" stroke="#333" stroke-width=".5"/><rect x="5" y="1" width="5" height="4" fill="#d8d830" stroke="#333" stroke-width=".5"/><path d="M1 1 L4 4" stroke="#2a2ab0" stroke-width="1.3"/></svg>
<div class="t" style="left:45px;top:359.4px;font-size:8px;color:#1a1a1a;transform:scaleX(0.97);">Bewehrung gem&auml;&szlig; Vorlage</div>
<svg style="left:21px;top:368px" width="11" height="11" viewBox="0 0 11 11"><path d="M2 1 V9 H10" stroke="#333"/><rect x="3" y="4" width="2" height="5" fill="#d8d830"/><path d="M6 9 L8 5 L10 9" fill="#2a2ab0"/></svg>
<div class="t" style="left:34px;top:370.2px;font-size:8px;color:#1a1a1a;transform:scaleX(0.97);">Modellkomponenten</div>
<svg style="left:32px;top:379px" width="11" height="11" viewBox="0 0 11 11"><path d="M1 2 H10 M1 9 H10 M2 2 L8 9 M8 2 L2 9" stroke="#2a2ab0" stroke-width="1.1"/></svg>
<div class="t" style="left:45px;top:381.0px;font-size:8px;color:#1a1a1a;transform:scaleX(0.97);">Auflager</div>
<svg style="left:32px;top:390px" width="11" height="11" viewBox="0 0 11 11"><path d="M2 1 V9" stroke="#333" stroke-width="1.5"/><path d="M2 5 H10" stroke="#2a2ab0"/><circle cx="3" cy="5" r="1.5" fill="#d8d830"/></svg>
<div class="t" style="left:45px;top:391.8px;font-size:8px;color:#1a1a1a;transform:scaleX(0.97);">Stabgelenk</div>
<svg style="left:32px;top:401px" width="11" height="11" viewBox="0 0 11 11"><path d="M1 7 L3 3 H10 L8 7Z" fill="#d8d830" stroke="#333" stroke-width=".6"/><path d="M3 5 H8" stroke="#2a2ab0" stroke-width="1.3"/></svg>
<div class="t" style="left:45px;top:402.6px;font-size:8px;color:#1a1a1a;transform:scaleX(0.97);">Liniengelenk auf 2D-Teil</div>
<svg style="left:32px;top:412px" width="11" height="11" viewBox="0 0 11 11"><path d="M1 2 H10 M1 8 H10" stroke="#d02020" stroke-width="1.5"/><path d="M5 2 V8" stroke="#d8d830" stroke-width="2"/></svg>
<div class="t" style="left:45px;top:413.4px;font-size:8px;color:#1a1a1a;transform:scaleX(0.97);">Starre Kopplungen</div>
<svg style="left:32px;top:422px" width="11" height="11" viewBox="0 0 11 11"><path d="M1 2 H10 M1 8 H10" stroke="#d02020" stroke-width="1.5"/><path d="M5 2 V8" stroke="#d8d830" stroke-width="2"/></svg>
<div class="t" style="left:45px;top:424.2px;font-size:8px;color:#1a1a1a;transform:scaleX(0.97);">Starre Linienkopplungen</div>
<svg style="left:32px;top:433px" width="11" height="11" viewBox="0 0 11 11"><path d="M1 1 L9 9 M9 1 L1 9" stroke="#2a2ab0" stroke-width="1.5"/><circle cx="5" cy="5" r="1.3" fill="#d8d830"/></svg>
<div class="t" style="left:45px;top:435.0px;font-size:8px;color:#1a1a1a;transform:scaleX(0.97);">Scherengelenk</div>
<svg style="left:32px;top:444px" width="11" height="11" viewBox="0 0 11 11"><path d="M1 5 H10" stroke="#d8d830" stroke-width="2.5"/><path d="M5 1 V10" stroke="#2a2ab0"/></svg>
<div class="t" style="left:45px;top:445.8px;font-size:8px;color:#1a1a1a;transform:scaleX(0.97);">Stabschnitt</div>
<svg style="left:32px;top:455px" width="11" height="11" viewBox="0 0 11 11"><path d="M1 9 L5 6 H10 L8 9Z" fill="#d8d830"/><circle cx="3" cy="4" r="1.5" fill="#2a2ab0"/><circle cx="6" cy="2" r="1" fill="#333"/></svg>
<div class="t" style="left:45px;top:456.6px;font-size:8px;color:#1a1a1a;transform:scaleX(0.97);">Teile/Knoten koppeln</div>
<svg style="left:32px;top:466px" width="11" height="11" viewBox="0 0 11 11"><path d="M1 3 H10 M1 8 H10" stroke="#333"/><path d="M1 5 H10" stroke="#d8d830" stroke-width="2"/></svg>
<div class="t" style="left:45px;top:467.4px;font-size:8px;color:#1a1a1a;transform:scaleX(0.97);">Balken - Nichtlinearit&auml;t</div>
<svg style="left:21px;top:476px" width="11" height="11" viewBox="0 0 11 11"><rect x="2" y="1" width="8" height="9" fill="#f0f0a0" stroke="#333" stroke-width=".7"/><rect x="5" y="3" width="4" height="6" fill="#d8d830"/></svg>
<div class="t" style="left:34px;top:478.2px;font-size:8px;color:#1a1a1a;transform:scaleX(0.97);">Strukturdaten kontrollieren</div>
<svg style="left:21px;top:487px" width="11" height="11" viewBox="0 0 11 11"><path d="M1 10 H10 L9 6 L5 8 L2 5Z" fill="#333"/><path d="M5 1 L9 5" stroke="#4a4" stroke-width="1.4"/></svg>
<div class="t" style="left:34px;top:489.0px;font-size:8px;color:#1a1a1a;transform:scaleX(0.97);">Modellieren/Zeichnen</div>
<svg style="left:32px;top:498px" width="11" height="11" viewBox="0 0 11 11"><path d="M2 9 V3 H9" fill="none" stroke="#d02020" stroke-width="1"/><circle cx="6" cy="7" r="2.5" fill="none" stroke="#d02020"/></svg>
<div class="t" style="left:45px;top:499.8px;font-size:8px;color:#1a1a1a;transform:scaleX(0.97);">Linie</div>
<svg style="left:44px;top:509px" width="11" height="11" viewBox="0 0 11 11"><path d="M2 2 H8 V5 H2 V10" fill="none" stroke="#d02020" stroke-width="1.1"/></svg>
<div class="t" style="left:56px;top:510.6px;font-size:8px;color:#1a1a1a;transform:scaleX(0.97);">Linie</div>
<svg style="left:44px;top:520px" width="11" height="11" viewBox="0 0 11 11"><path d="M1 10 L5 1 L9 10 M3 7 H7" fill="none" stroke="#111" stroke-width="1.3"/></svg>
<div class="t" style="left:56px;top:521.4px;font-size:8px;color:#1a1a1a;transform:scaleX(0.97);">Textzeilen</div>
<svg style="left:32px;top:530px" width="11" height="11" viewBox="0 0 11 11"><path d="M2 10 L6 2 M6 10 L9 4" stroke="#d02020" stroke-width="1.1"/></svg>
<div class="t" style="left:45px;top:532.1999999999999px;font-size:8px;color:#1a1a1a;transform:scaleX(0.97);">Bema&szlig;ungswerkzeuge</div>
<svg style="left:32px;top:541px" width="11" height="11" viewBox="0 0 11 11"><path d="M1 9 L3 5 H9 V9Z M5 5 V2 H9 V5" fill="none" stroke="#d02020" stroke-width="1"/></svg>
<div class="t" style="left:45px;top:543.0px;font-size:8px;color:#1a1a1a;transform:scaleX(0.97);">K&ouml;rper</div>
<svg style="left:32px;top:552px" width="11" height="11" viewBox="0 0 11 11"><path d="M1 8 L5 4 L10 3 L7 9Z" fill="#2a8a8a" stroke="#333" stroke-width=".5"/><path d="M6 1 L9 3" stroke="#333"/></svg>
<div class="t" style="left:45px;top:553.8000000000001px;font-size:8px;color:#1a1a1a;transform:scaleX(0.97);">Offene Schale</div>
<svg style="left:32px;top:563px" width="11" height="11" viewBox="0 0 11 11"><path d="M1 4 H10 V10 H1Z" fill="#b8b840" stroke="#333" stroke-width=".6"/><path d="M1 10 L3 6 H10" fill="none" stroke="#333" stroke-width=".6"/><text x="3" y="3" font-size="3.5" fill="#000" font-family="Liberation Sans">dwg</text></svg>
<div class="t" style="left:45px;top:564.6px;font-size:8px;color:#1a1a1a;transform:scaleX(0.97);">Import DWG, DXF, VRML97</div>
<svg style="left:21px;top:574px" width="11" height="11" viewBox="0 0 11 11"><rect x="1" y="2" width="9" height="3" fill="#d8d830" stroke="#333" stroke-width=".6"/><rect x="1" y="6" width="9" height="3" fill="#6a6ac8" stroke="#333" stroke-width=".6"/><path d="M3 5 V6" stroke="#d02020" stroke-width="2"/></svg>
<div class="t" style="left:34px;top:575.4px;font-size:8px;color:#1a1a1a;transform:scaleX(0.97);">&Uuml;bertragen/Aufteilen/Vereinigen</div>
<svg style="left:21px;top:584px" width="11" height="11" viewBox="0 0 11 11"><rect x="1" y="1.5" width="10" height="8" fill="#fff" stroke="#3030a0" stroke-width="1.1"/></svg>
<div class="t" style="left:34px;top:586.1999999999999px;font-size:8px;color:#1a1a1a;transform:scaleX(0.97);">Materialliste</div>
<div style="left:8px;top:640px;width:145px;height:11px;background:#e8e6e0"></div>
<div style="left:8px;top:640px;width:11px;height:11px;background:#d4d0c8;box-shadow:inset 1px 1px 0 #fff, inset -1px -1px 0 #808080"></div>
<svg style="left:11px;top:642px" width="6" height="7" viewBox="0 0 6 7"><path d="M4 0 V7 L0.5 3.5Z" fill="#000"/></svg>
<div style="left:20px;top:640px;width:118px;height:11px;background:#d4d0c8;box-shadow:inset 1px 1px 0 #fff, inset -1px -1px 0 #808080"></div>
<div style="left:141px;top:640px;width:12px;height:11px;background:#d4d0c8;box-shadow:inset 1px 1px 0 #fff, inset -1px -1px 0 #808080"></div>
<svg style="left:145px;top:642px" width="6" height="7" viewBox="0 0 6 7"><path d="M1 0 V7 L4.5 3.5Z" fill="#000"/></svg>
<div style="left:7px;top:651px;width:147px;height:1px;background:#404040"></div>
<div style="left:6px;top:655px;width:51px;height:16px;background:#d4d0c8;box-shadow:inset 1px 1px 0 #fff, inset -1px -1px 0 #404040, inset -2px -2px 0 #808080"></div>
<div class="t" style="left:25px;top:659px;font-size:8px;color:#111;transform:scaleX(0.97);">Neu</div>
<div style="left:58px;top:655px;width:51px;height:16px;background:#d4d0c8;box-shadow:inset 1px 1px 0 #fff, inset -1px -1px 0 #404040, inset -2px -2px 0 #808080"></div>
<div class="t" style="left:66px;top:659px;font-size:8px;color:#111;transform:scaleX(0.97);">Schlie&szlig;en</div>
<div style="left:0px;top:672px;width:160px;height:14px;background:#d4d0c8"></div>
<div style="left:2px;top:672px;width:155px;height:1px;background:#808080"></div>
<div style="left:4px;top:673px;width:17px;height:12px;background:#d4d0c8;box-shadow:inset -1px -1px 0 #404040"></div>
<svg style="left:7px;top:675px" width="10" height="9" viewBox="0 0 10 9"><rect x="1" y="1" width="3" height="3" fill="#c33"/><rect x="5" y="3" width="4" height="3" fill="#3aa"/><rect x="3" y="5" width="4" height="3" fill="#3a3"/></svg>
<div style="left:21px;top:672px;width:18px;height:13px;background:#d4d0c8;box-shadow:inset 1px 0 0 #fff, inset -1px -1px 0 #404040"></div>
<svg style="left:25px;top:675px" width="10" height="8" viewBox="0 0 10 8"><rect x=".5" y=".5" width="9" height="7" fill="#fff" stroke="#2a2aa0"/><rect x="1" y="1" width="8" height="1.5" fill="#2a2aa0"/></svg>
<div style="left:160px;top:62px;width:785px;height:556px;background:#fff;box-shadow:inset 1px 1px 0 #404040"></div>
<div style="left:160px;top:62px;width:800px;height:1px;background:#808080"></div>
<div style="left:945px;top:63px;width:12px;height:555px;background:#edebe6"></div>
<div style="left:945px;top:64px;width:12px;height:12px;background:#d4d0c8;box-shadow:inset 1px 1px 0 #fff, inset -1px -1px 0 #808080"></div>
<svg style="left:947px;top:67px" width="8" height="5" viewBox="0 0 8 5"><path d="M0 4.5 H7.5 L3.75 .5Z" fill="#000"/></svg>
<div style="left:945px;top:288px;width:12px;height:13px;background:#d4d0c8;box-shadow:inset 1px 1px 0 #fff, inset -1px -1px 0 #404040"></div>
<div style="left:945px;top:514px;width:12px;height:11px;background:#d4d0c8;box-shadow:inset 1px 1px 0 #fff, inset -1px -1px 0 #808080"></div>
<svg style="left:947px;top:517px" width="8" height="5" viewBox="0 0 8 5"><path d="M0 .5 H7.5 L3.75 4.5Z" fill="#000"/></svg>
<div style="left:945px;top:525px;width:12px;height:93px;background:linear-gradient(90deg,#353535,#5c5c5c 50%,#353535);box-shadow:inset 0 0 0 1px #555, inset 0 0 0 2px #888, inset 0 0 0 3px #333"></div>
<div style="left:957px;top:63px;width:3px;height:570px;background:#d4d0c8"></div>
<div style="left:958px;top:63px;width:1px;height:570px;background:#fff"></div>
<div style="left:160px;top:618px;width:800px;height:14px;background:#d4d0c8"></div>
<div style="left:161.5px;top:618px;width:13px;height:13px;background:#e4e2dc;box-shadow:inset 1px 1px 0 #fff, inset -1px -1px 0 #808080"></div>
<div style="left:175px;top:618px;width:13px;height:13px;background:#e4e2dc;box-shadow:inset 1px 1px 0 #fff, inset -1px -1px 0 #808080"></div>
<div style="left:190px;top:618px;width:13px;height:13px;background:#e4e2dc;box-shadow:inset 1px 1px 0 #fff, inset -1px -1px 0 #808080"></div>
<div style="left:203px;top:618px;width:13px;height:13px;background:#e4e2dc;box-shadow:inset 1px 1px 0 #fff, inset -1px -1px 0 #808080"></div>
<div style="left:217px;top:618px;width:13px;height:13px;background:#e4e2dc;box-shadow:inset 1px 1px 0 #fff, inset -1px -1px 0 #808080"></div>
<div style="left:231px;top:618px;width:13px;height:13px;background:#e4e2dc;box-shadow:inset 1px 1px 0 #fff, inset -1px -1px 0 #808080"></div>
<div style="left:245px;top:618px;width:13px;height:13px;background:#e4e2dc;box-shadow:inset 1px 1px 0 #fff, inset -1px -1px 0 #808080"></div>
<div style="left:260px;top:618px;width:13px;height:13px;background:#e4e2dc;box-shadow:inset 1px 1px 0 #fff, inset -1px -1px 0 #808080"></div>
<div style="left:273px;top:618px;width:13px;height:13px;background:#e4e2dc;box-shadow:inset 1px 1px 0 #fff, inset -1px -1px 0 #808080"></div>
<div style="left:290px;top:618px;width:13px;height:13px;background:#e4e2dc;box-shadow:inset 1px 1px 0 #fff, inset -1px -1px 0 #808080"></div>
<div style="left:303px;top:618px;width:13px;height:13px;background:#e4e2dc;box-shadow:inset 1px 1px 0 #fff, inset -1px -1px 0 #808080"></div>
<svg style="left:163.0px;top:619.5px" width="10" height="10" viewBox="0 0 10 10"><path d="M2 4 L4 2 H8 V6 L6 8 H2Z M2 4 H6 V8 M6 4 L8 2" fill="none" stroke="#222"/></svg>
<svg style="left:176.5px;top:619.5px" width="10" height="10" viewBox="0 0 10 10"><path d="M2 4 L4 2 H8 V6 L6 8 H2Z" fill="#e0e020" stroke="#222"/><path d="M2 4 H6 V8 M6 4 L8 2" fill="none" stroke="#222"/></svg>
<svg style="left:191.5px;top:619.5px" width="10" height="10" viewBox="0 0 10 10"><path d="M5 1 V5 M2 8 L5 5 L8 8 M1 9 H9" fill="none" stroke="#aaa"/></svg>
<svg style="left:204.5px;top:619.5px" width="10" height="10" viewBox="0 0 10 10"><path d="M1 9 H9 M2 9 V5 M5 9 V3 M8 9 V6" fill="none" stroke="#999"/></svg>
<svg style="left:218.5px;top:619.5px" width="10" height="10" viewBox="0 0 10 10"><path d="M2 1 V9 H9" stroke="#2a2ab0" fill="none"/><rect x="3" y="1" width="6" height="3" fill="none" stroke="#d02020"/></svg>
<svg style="left:232.5px;top:619.5px" width="10" height="10" viewBox="0 0 10 10"><text x="1" y="4.5" font-size="4.5" font-family="Liberation Sans" font-weight="bold">ABC</text><path d="M1 7 H9" stroke="#2a2ab0" stroke-width="1.3"/></svg>
<svg style="left:246.5px;top:619.5px" width="10" height="10" viewBox="0 0 10 10"><text x="1" y="4.5" font-size="4.5" font-family="Liberation Sans" font-weight="bold">ABC</text><ellipse cx="5" cy="7" rx="4" ry="1.8" fill="#c8c820" stroke="#333" stroke-width=".6"/></svg>
<svg style="left:261.5px;top:619.5px" width="10" height="10" viewBox="0 0 10 10"><path d="M1 9 L5 3 L9 9Z" fill="none" stroke="#3a3" stroke-dasharray="1 1"/><path d="M1 9 H9" stroke="#d02020"/></svg>
<svg style="left:274.5px;top:619.5px" width="10" height="10" viewBox="0 0 10 10"><path d="M2 1 V9 H8 V1" fill="none" stroke="#aaa"/></svg>
<svg style="left:291.5px;top:619.5px" width="10" height="10" viewBox="0 0 10 10"><rect x="1" y="1" width="8" height="8" fill="#4a4" stroke="#2a2ab0"/><rect x="3" y="3" width="4" height="4" fill="#e0e020"/></svg>
<svg style="left:304.5px;top:619.5px" width="10" height="10" viewBox="0 0 10 10"><path d="M2 2 H8 M3 2 V9 M6 2 V9" fill="none" stroke="#aaa"/></svg>
<div style="left:316px;top:618px;width:13px;height:13px;background:#d4d0c8;box-shadow:inset 1px 1px 0 #fff, inset -1px -1px 0 #808080"></div>
<svg style="left:320px;top:621px" width="5" height="7" viewBox="0 0 5 7"><path d="M4 0 V7 L.5 3.5Z" fill="#000"/></svg>
<div style="left:329px;top:618px;width:446px;height:13px;background:#edebe6"></div>
<div style="left:544px;top:618px;width:13px;height:13px;background:#d4d0c8;box-shadow:inset 1px 1px 0 #fff, inset -1px -1px 0 #808080"></div>
<div style="left:775px;top:618px;width:11px;height:13px;background:#d4d0c8;box-shadow:inset 1px 1px 0 #fff, inset -1px -1px 0 #808080"></div>
<svg style="left:778px;top:621px" width="5" height="7" viewBox="0 0 5 7"><path d="M1 0 V7 L4.5 3.5Z" fill="#000"/></svg>
<div style="left:786px;top:618px;width:77px;height:13px;background:linear-gradient(180deg,#353535,#5c5c5c 50%,#353535);box-shadow:inset 0 0 0 1px #555, inset 0 0 0 2px #888, inset 0 0 0 3px #333"></div>
<div style="left:864px;top:618px;width:80px;height:13px;background:linear-gradient(180deg,#353535,#5c5c5c 50%,#353535);box-shadow:inset 0 0 0 1px #555, inset 0 0 0 2px #888, inset 0 0 0 3px #333"></div>
<div style="left:944px;top:618px;width:13px;height:14px;background:#e6e4de"></div>
<div style="left:160px;top:631px;width:800px;height:3px;background:#d4d0c8"></div>
<div style="left:160px;top:634px;width:800px;height:14px;background:#808080"></div>
<div class="t" style="left:163px;top:637px;font-size:9px;color:#d4d0c8;transform:scaleX(0.9);">Befehlszeile</div>
<svg style="left:937px;top:637px" width="8" height="9" viewBox="0 0 8 9"><path d="M2.5 1 H5.5 V5 H7 V6 H1 V5 H2.5Z M4 6 V8.5" fill="#e8e8e8" stroke="#e8e8e8" stroke-width=".7"/></svg>
<svg style="left:949px;top:638px" width="8" height="8" viewBox="0 0 8 8"><path d="M1 1 L7 7 M7 1 L1 7" stroke="#f0f0f0" stroke-width="1.4"/></svg>
<div style="left:160px;top:648px;width:800px;height:38px;background:#d4d0c8"></div>
<div style="left:161px;top:649px;width:98px;height:15px;box-shadow:inset 1px 1px 0 #fff, inset -1px -1px 0 #808080"></div>
<div style="left:162px;top:650px;width:14px;height:13px;background:#e4e2dc;box-shadow:inset 1px 1px 0 #fff, inset -1px -1px 0 #808080"></div>
<svg style="left:165px;top:652px" width="9" height="10" viewBox="0 0 9 10"><path d="M1 .5 V8 L3 6 L5 9 L6 8.5 L4.5 5.5 H7Z" fill="#fff" stroke="#222" stroke-width=".8"/></svg>
<svg style="left:176px;top:651px" width="10" height="10" viewBox="0 0 10 10"><path d="M1 9 H9 L7 6 H3Z" fill="#2a2ab0"/><path d="M5 1 V6 M3 3 H7" stroke="#2a2ab0"/></svg>
<svg style="left:190px;top:651px" width="10" height="10" viewBox="0 0 10 10"><path d="M1 4 H7 M3 6 H9" stroke="#2a2ab0" stroke-width="1.2"/><circle cx="2" cy="6" r="1.2" fill="#2a2ab0"/></svg>
<svg style="left:203px;top:651px" width="10" height="10" viewBox="0 0 10 10"><path d="M2 1 V9 M2 5 H9" stroke="#2a2ab0" stroke-width="1.4"/></svg>
<svg style="left:217px;top:651px" width="10" height="10" viewBox="0 0 10 10"><path d="M1 3 H9 M1 7 H9" stroke="#2a2ab0"/><path d="M1 7 H7" stroke="#d02020" stroke-width="1.2"/><path d="M6 5 L8 7 L6 9" fill="none" stroke="#d02020"/></svg>
<svg style="left:231px;top:651px" width="10" height="10" viewBox="0 0 10 10"><path d="M1 3 H9" stroke="#2a2ab0"/><path d="M1 7 H7" stroke="#d02020" stroke-width="1.2"/><path d="M6 5 L8 7 L6 9" fill="none" stroke="#d02020"/></svg>
<svg style="left:245px;top:651px" width="10" height="10" viewBox="0 0 10 10"><path d="M1 3 H9" stroke="#2a2ab0"/><path d="M1 7 H7" stroke="#d02020" stroke-width="1.2"/><path d="M6 5 L8 7 L6 9" fill="none" stroke="#d02020"/><path d="M8 2 V4" stroke="#2a2ab0"/></svg>
<div style="left:165px;top:670px;width:792px;height:14px;background:#fff;box-shadow:inset 1px 1px 0 #404040, inset -1px -1px 0 #e8e6e0"></div>
<div class="t" style="left:168px;top:673px;font-size:8px;color:#111;transform:scaleX(0.97);">Befehl &gt;</div>
<div style="left:665px;top:649px;width:295px;height:15px;box-shadow:inset 1px 1px 0 #fff, inset -1px -1px 0 #808080"></div>
<svg style="left:664px;top:651px" width="10" height="10" viewBox="0 0 10 10"><path d="M2 2 L8 8" stroke="#999"/><circle cx="2" cy="2" r="1" fill="#999"/></svg>
<svg style="left:678px;top:651px" width="10" height="10" viewBox="0 0 10 10"><path d="M2 2 L8 8" stroke="#999"/><circle cx="2" cy="2" r="1" fill="#999"/></svg>
<svg style="left:692.5px;top:651px" width="10" height="10" viewBox="0 0 10 10"><path d="M2 2 L8 8" stroke="#999"/><circle cx="2" cy="2" r="1" fill="#999"/></svg>
<svg style="left:706.5px;top:651px" width="10" height="10" viewBox="0 0 10 10"><path d="M2 2 L8 8" stroke="#999"/><circle cx="2" cy="2" r="1" fill="#999"/></svg>
<div style="left:719px;top:650px;width:1px;height:13px;background:#808080"></div>
<div style="left:720px;top:650px;width:1px;height:13px;background:#fff"></div>
<svg style="left:725px;top:651px" width="10" height="10" viewBox="0 0 10 10"><path d="M1 8 L5 2 L9 8" fill="none" stroke="#999"/></svg>
<svg style="left:738px;top:651px" width="10" height="10" viewBox="0 0 10 10"><path d="M1 9 L9 1 M5 2 H9 V5" fill="none" stroke="#999"/></svg>
<svg style="left:752px;top:651px" width="10" height="10" viewBox="0 0 10 10"><path d="M1 2 H9 L5 9Z" fill="none" stroke="#999"/></svg>
<svg style="left:764px;top:651px" width="10" height="10" viewBox="0 0 10 10"><path d="M1 8 L9 2" stroke="#999"/><circle cx="8" cy="2" r="1" fill="#999"/></svg>
<div style="left:780px;top:650px;width:1px;height:13px;background:#808080"></div>
<div style="left:781px;top:650px;width:1px;height:13px;background:#fff"></div>
<svg style="left:783px;top:651px" width="11" height="11" viewBox="0 0 11 11"><path d="M2 2 L9 9 M9 2 L2 9" stroke="#2a2ab0" stroke-width="1.3"/><rect x="5" y="1" width="5" height="4" fill="#fff" stroke="#2a2ab0" stroke-width=".8"/><circle cx="3" cy="3" r="1.3" fill="#d02020"/></svg>
<div style="left:797px;top:650px;width:1px;height:13px;background:#808080"></div>
<div style="left:798px;top:650px;width:1px;height:13px;background:#fff"></div>
<svg style="left:799px;top:651px" width="10" height="10" viewBox="0 0 10 10"><path d="M1.5 2 V9 M4.5 2 V9 M7.5 2 V9 M1 3 H9 M1 6 H9 M1 9 H9" stroke="#222" stroke-dasharray="1 1"/></svg>
<svg style="left:811px;top:651px" width="10" height="10" viewBox="0 0 10 10"><path d="M1 9 H9 M3 2 V9 M7 2 V9 M1 4 H5" stroke="#2a2ab0"/><circle cx="7" cy="3" r="1" fill="#d02020"/></svg>
<svg style="left:824px;top:651px" width="10" height="10" viewBox="0 0 10 10"><path d="M1 1 L9 9 M9 1 L1 9" stroke="#2a8a2a" stroke-width="1.3"/><circle cx="2" cy="8" r="1.2" fill="#d02020"/></svg>
<div style="left:836px;top:650px;width:13px;height:13px;background:#eceae4;box-shadow:inset 1px 1px 0 #fff, inset -1px -1px 0 #808080"></div>
<div style="left:849px;top:650px;width:13px;height:13px;background:#eceae4;box-shadow:inset 1px 1px 0 #fff, inset -1px -1px 0 #808080"></div>
<div style="left:862px;top:650px;width:13px;height:13px;background:#eceae4;box-shadow:inset 1px 1px 0 #fff, inset -1px -1px 0 #808080"></div>
<div style="left:875px;top:650px;width:13px;height:13px;background:#eceae4;box-shadow:inset 1px 1px 0 #fff, inset -1px -1px 0 #808080"></div>
<svg style="left:837.5px;top:651.5px" width="10" height="10" viewBox="0 0 10 10"><path d="M1 2 H5 M2 1 L9 9" stroke="#333"/><circle cx="2" cy="2" r="1.3" fill="#d02020"/><circle cx="8" cy="8" r="1.4" fill="#d02020"/></svg>
<svg style="left:850.5px;top:651.5px" width="10" height="10" viewBox="0 0 10 10"><path d="M1 1 V9 M1 1 L9 9" stroke="#333"/><circle cx="2" cy="2" r="1.3" fill="#d02020"/><circle cx="8" cy="8" r="1.4" fill="#d02020"/></svg>
<svg style="left:863.5px;top:651.5px" width="10" height="10" viewBox="0 0 10 10"><path d="M1 1 V9 M1 2 L9 9 M9 2 L1 9" stroke="#333"/><circle cx="5" cy="5" r="1.6" fill="#d02020"/></svg>
<svg style="left:876.5px;top:651.5px" width="10" height="10" viewBox="0 0 10 10"><path d="M1 2 L5 8 L9 2 M1 2 H9" fill="none" stroke="#2a2ab0"/><circle cx="5" cy="7" r="1.6" fill="#d02020"/></svg>
<svg style="left:891px;top:651px" width="10" height="10" viewBox="0 0 10 10"><path d="M1 9 Q5 1 9 3" fill="none" stroke="#333"/><path d="M2 2 V7" stroke="#2a2ab0"/><circle cx="8" cy="8" r="1.3" fill="#d02020"/></svg>
<svg style="left:903px;top:651px" width="10" height="10" viewBox="0 0 10 10"><path d="M1 2 V9 H9 L5 4" fill="none" stroke="#333"/><circle cx="2" cy="2" r="1.3" fill="#d02020"/><circle cx="8" cy="8" r="1.3" fill="#d02020"/></svg>
<svg style="left:915px;top:651px" width="10" height="10" viewBox="0 0 10 10"><path d="M1 9 L5 5 L9 1 M3 3 L7 7" fill="none" stroke="#333"/><circle cx="8" cy="2" r="1.3" fill="#d02020"/></svg>
<div style="left:929px;top:650px;width:14px;height:13px;background:#eceae4;box-shadow:inset 1px 1px 0 #fff, inset -1px -1px 0 #808080"></div>
<svg style="left:931px;top:652px" width="10" height="10" viewBox="0 0 10 10"><rect x="1" y="5" width="8" height="4" fill="#c8c820" stroke="#333" stroke-width=".7"/><path d="M1 3 H9" stroke="#333"/><circle cx="2" cy="2" r="1.2" fill="#d02020"/></svg>
<svg style="left:946px;top:652px" width="10" height="10" viewBox="0 0 10 10"><rect x="3" y="2" width="5" height="7" fill="#e8e060" stroke="#333" stroke-width=".7"/><circle cx="2" cy="2" r="1.3" fill="#d02020"/></svg>
<div style="left:0px;top:686px;width:960px;height:14px;background:#d4d0c8"></div>
<div style="left:0px;top:686px;width:960px;height:1px;background:#fff"></div>
<div style="left:0px;top:687px;width:78px;height:12px;box-shadow:inset -1px -1px 0 #fff, inset 1px 1px 0 #808080"></div>
<div style="left:79px;top:687px;width:78px;height:12px;box-shadow:inset -1px -1px 0 #fff, inset 1px 1px 0 #808080"></div>
<div style="left:158px;top:687px;width:23px;height:12px;box-shadow:inset -1px -1px 0 #fff, inset 1px 1px 0 #808080"></div>
<div class="t" style="left:163px;top:690px;font-size:8px;color:#111;transform:scaleX(0.97);">mm</div>
<div style="left:182px;top:687px;width:42px;height:12px;box-shadow:inset -1px -1px 0 #fff, inset 1px 1px 0 #808080"></div>
<div class="t" style="left:188px;top:690px;font-size:8px;color:#111;transform:scaleX(0.97);width:35px;overflow:hidden">Ebene XY</div>
<div class="t" style="left:229px;top:690px;font-size:8px;color:#111;transform:scaleX(0.97);">Bereit</div>
<div style="left:0px;top:700px;width:960px;height:20px;background:#d4d0c8"></div>
<div style="left:0px;top:700px;width:960px;height:1px;background:#d4d0c8"></div>
<div style="left:0px;top:701px;width:960px;height:1px;background:#fff"></div>
<div style="left:1px;top:702px;width:39px;height:17px;background:#d4d0c8;box-shadow:inset 1px 1px 0 #fff, inset -1px -1px 0 #404040, inset -2px -2px 0 #808080"></div>
<svg style="left:4px;top:705px" width="12" height="11" viewBox="0 0 12 11"><path d="M1 2 Q3 1 5.5 2 V5.5 Q3 4.5 1 5.5Z" fill="#e84020"/><path d="M6 2 Q8.5 1 11 2 V5.5 Q8.5 4.5 6 5.5Z" fill="#40a030"/><path d="M1 6 Q3 5 5.5 6 V9.5 Q3 8.5 1 9.5Z" fill="#3060d0"/><path d="M6 6 Q8.5 5 11 6 V9.5 Q8.5 8.5 6 9.5Z" fill="#e8c020"/></svg>
<div class="t" style="left:16px;top:706px;font-size:9px;color:#000;transform:scaleX(0.95);font-weight:bold">Start</div>
<div style="left:42px;top:702px;width:97px;height:17px;background:#d4d0c8;box-shadow:inset 1px 1px 0 #fff, inset -1px -1px 0 #404040, inset -2px -2px 0 #808080"></div>
<svg style="left:45px;top:705px" width="12" height="11" viewBox="0 0 12 11"><path d="M1 1 L4 1 L5 5 Z" fill="#3a3"/><path d="M4 1 L8 1 L6 6 Z" fill="#e33"/><path d="M7 1 L11 2 L7 6Z" fill="#36c"/><path d="M5 5 L8 5 L6 11 Z" fill="#c93"/></svg>
<div class="t" style="left:58px;top:706px;font-size:9px;color:#111;transform:scaleX(0.92);">Scia Engineer - [GA...</div>
<div style="left:141px;top:702px;width:97px;height:17px;background:#d4d0c8;box-shadow:inset 1px 1px 0 #fff, inset -1px -1px 0 #404040, inset -2px -2px 0 #808080"></div>
<svg style="left:144px;top:704px" width="11" height="13" viewBox="0 0 11 13"><path d="M2 1 L9 1 L7 11 L4 11Z" fill="#e0c020" stroke="#888" stroke-width=".5"/><path d="M3 3 L6 8" stroke="#d02020" stroke-width="1.5"/><path d="M6 2 L5 7" stroke="#3060d0" stroke-width="1.2"/></svg>
<div class="t" style="left:157px;top:706px;font-size:9px;color:#111;transform:scaleX(0.92);">Screenshot - Paint</div>
<svg style="left:161px;top:64px" width="784" height="554" viewBox="161 64 784 554"><polygon points="205.5,341.5 426,176 902.5,331 678.5,492" fill="#cdcdcd" /><polygon points="205.5,341.5 678.5,492 678.5,503.5 205.5,352.5" fill="#2b2b2b" /><polygon points="678.5,492 902.5,331 903.5,342 678.5,503.5" fill="#2e2e2e" /><polyline points="856,315.5 902.5,331" fill="none" stroke="#555" stroke-width="0.7" /><polyline points="205.5,341.5 678.5,492 902.5,331" fill="none" stroke="#555" stroke-width="1" /><polyline points="230,361 685.4,507.8" fill="none" stroke="#777" stroke-width="0.6" /><polyline points="685.4,499.9 685.4,507.8" fill="none" stroke="#777" stroke-width="0.6" /><polyline points="240,331 671,469" fill="none" stroke="#333" stroke-width="1" stroke-dasharray="7 6"/><polyline points="219,343 232,334" fill="none" stroke="#333" stroke-width="0.8" /><polyline points="237.5,300 237.5,331" fill="none" stroke="#444" stroke-width="0.7" stroke-dasharray="4 3"/><polyline points="363.75,322 363.75,365" fill="none" stroke="#444" stroke-width="0.7" stroke-dasharray="4 3"/><polyline points="393.75,330 393.75,380" fill="none" stroke="#444" stroke-width="0.7" stroke-dasharray="4 3"/><polyline points="557.5,375 557.5,435" fill="none" stroke="#444" stroke-width="0.7" stroke-dasharray="4 3"/><polyline points="488,375 488,420" fill="none" stroke="#444" stroke-width="0.7" stroke-dasharray="4 3"/><polyline points="684.7,425 684.7,474" fill="none" stroke="#444" stroke-width="0.7" stroke-dasharray="4 3"/><line x1="425.0" y1="345.0" x2="432.0" y2="347.2" stroke="#777" stroke-width=".9"/><line x1="425.0" y1="351.0" x2="432.0" y2="353.2" stroke="#777" stroke-width=".9"/><line x1="425.0" y1="357.0" x2="432.0" y2="359.2" stroke="#777" stroke-width=".9"/><line x1="425.0" y1="363.0" x2="432.0" y2="365.2" stroke="#777" stroke-width=".9"/><line x1="442.5" y1="350.6" x2="449.5" y2="352.8" stroke="#777" stroke-width=".9"/><line x1="442.5" y1="356.6" x2="449.5" y2="358.8" stroke="#777" stroke-width=".9"/><line x1="442.5" y1="362.6" x2="449.5" y2="364.8" stroke="#777" stroke-width=".9"/><line x1="442.5" y1="368.6" x2="449.5" y2="370.8" stroke="#777" stroke-width=".9"/><line x1="460.0" y1="356.2" x2="467.0" y2="358.4" stroke="#777" stroke-width=".9"/><line x1="460.0" y1="362.2" x2="467.0" y2="364.4" stroke="#777" stroke-width=".9"/><line x1="460.0" y1="368.2" x2="467.0" y2="370.4" stroke="#777" stroke-width=".9"/><line x1="460.0" y1="374.2" x2="467.0" y2="376.4" stroke="#777" stroke-width=".9"/><line x1="477.5" y1="361.8" x2="484.5" y2="364.0" stroke="#777" stroke-width=".9"/><line x1="477.5" y1="367.8" x2="484.5" y2="370.0" stroke="#777" stroke-width=".9"/><line x1="477.5" y1="373.8" x2="484.5" y2="376.0" stroke="#777" stroke-width=".9"/><line x1="477.5" y1="379.8" x2="484.5" y2="382.0" stroke="#777" stroke-width=".9"/><line x1="495.0" y1="367.4" x2="502.0" y2="369.6" stroke="#777" stroke-width=".9"/><line x1="495.0" y1="373.4" x2="502.0" y2="375.6" stroke="#777" stroke-width=".9"/><line x1="495.0" y1="379.4" x2="502.0" y2="381.6" stroke="#777" stroke-width=".9"/><line x1="495.0" y1="385.4" x2="502.0" y2="387.6" stroke="#777" stroke-width=".9"/><line x1="250.0" y1="318.0" x2="257.0" y2="320.2" stroke="#888" stroke-width=".8"/><line x1="250.0" y1="324.0" x2="257.0" y2="326.2" stroke="#888" stroke-width=".8"/><line x1="250.0" y1="330.0" x2="257.0" y2="332.2" stroke="#888" stroke-width=".8"/><line x1="267.5" y1="323.6" x2="274.5" y2="325.8" stroke="#888" stroke-width=".8"/><line x1="267.5" y1="329.6" x2="274.5" y2="331.8" stroke="#888" stroke-width=".8"/><line x1="267.5" y1="335.6" x2="274.5" y2="337.8" stroke="#888" stroke-width=".8"/><line x1="285.0" y1="329.2" x2="292.0" y2="331.4" stroke="#888" stroke-width=".8"/><line x1="285.0" y1="335.2" x2="292.0" y2="337.4" stroke="#888" stroke-width=".8"/><line x1="285.0" y1="341.2" x2="292.0" y2="343.4" stroke="#888" stroke-width=".8"/><polygon points="238,305 263,314 238,331" fill="#8e6a12" /><polygon points="380,349 403,342 392,352" fill="#8e6a12" /><polygon points="682,436 712,414 712,452.5 682,446" fill="#8e6a12" /><polygon points="712,408 855,306 855,350 712,452.5" fill="#86620c" /><path d="M224,300 L371,348 L406,339.5 L425,337.5 L460,341 L505,356 Q526,368 527.5,399 L672.5,445 L711,415 L712,408 L729,257 L712,266.5 L696,262.5 L596,345.7 L591,336 L540,323 L456,297 L471,282 Q485,274.7 511,252.4 C526,251 548,240 553,224.5 L529,213 L236.5,291 Z" fill="#5e5e5e" stroke="none" stroke-width="1" /><line x1="527.0" y1="367.0" x2="534.0" y2="369.2" stroke="#333" stroke-width="1"/><line x1="527.0" y1="373.0" x2="534.0" y2="375.2" stroke="#333" stroke-width="1"/><line x1="527.0" y1="379.0" x2="534.0" y2="381.2" stroke="#333" stroke-width="1"/><line x1="527.0" y1="385.0" x2="534.0" y2="387.2" stroke="#333" stroke-width="1"/><line x1="544.5" y1="372.6" x2="551.5" y2="374.8" stroke="#333" stroke-width="1"/><line x1="544.5" y1="378.6" x2="551.5" y2="380.8" stroke="#333" stroke-width="1"/><line x1="544.5" y1="384.6" x2="551.5" y2="386.8" stroke="#333" stroke-width="1"/><line x1="544.5" y1="390.6" x2="551.5" y2="392.8" stroke="#333" stroke-width="1"/><line x1="562.0" y1="378.2" x2="569.0" y2="380.4" stroke="#333" stroke-width="1"/><line x1="562.0" y1="384.2" x2="569.0" y2="386.4" stroke="#333" stroke-width="1"/><line x1="562.0" y1="390.2" x2="569.0" y2="392.4" stroke="#333" stroke-width="1"/><line x1="562.0" y1="396.2" x2="569.0" y2="398.4" stroke="#333" stroke-width="1"/><line x1="579.5" y1="383.8" x2="586.5" y2="386.0" stroke="#333" stroke-width="1"/><line x1="579.5" y1="389.8" x2="586.5" y2="392.0" stroke="#333" stroke-width="1"/><line x1="579.5" y1="395.8" x2="586.5" y2="398.0" stroke="#333" stroke-width="1"/><line x1="579.5" y1="401.8" x2="586.5" y2="404.0" stroke="#333" stroke-width="1"/><line x1="597.0" y1="389.4" x2="604.0" y2="391.6" stroke="#333" stroke-width="1"/><line x1="597.0" y1="395.4" x2="604.0" y2="397.6" stroke="#333" stroke-width="1"/><line x1="597.0" y1="401.4" x2="604.0" y2="403.6" stroke="#333" stroke-width="1"/><line x1="597.0" y1="407.4" x2="604.0" y2="409.6" stroke="#333" stroke-width="1"/><line x1="614.5" y1="395.0" x2="621.5" y2="397.2" stroke="#333" stroke-width="1"/><line x1="614.5" y1="401.0" x2="621.5" y2="403.2" stroke="#333" stroke-width="1"/><line x1="614.5" y1="407.0" x2="621.5" y2="409.2" stroke="#333" stroke-width="1"/><line x1="614.5" y1="413.0" x2="621.5" y2="415.2" stroke="#333" stroke-width="1"/><line x1="632.0" y1="400.6" x2="639.0" y2="402.8" stroke="#333" stroke-width="1"/><line x1="632.0" y1="406.6" x2="639.0" y2="408.8" stroke="#333" stroke-width="1"/><line x1="632.0" y1="412.6" x2="639.0" y2="414.8" stroke="#333" stroke-width="1"/><line x1="632.0" y1="418.6" x2="639.0" y2="420.8" stroke="#333" stroke-width="1"/><line x1="649.5" y1="406.2" x2="656.5" y2="408.4" stroke="#333" stroke-width="1"/><line x1="649.5" y1="412.2" x2="656.5" y2="414.4" stroke="#333" stroke-width="1"/><line x1="649.5" y1="418.2" x2="656.5" y2="420.4" stroke="#333" stroke-width="1"/><line x1="649.5" y1="424.2" x2="656.5" y2="426.4" stroke="#333" stroke-width="1"/><line x1="667.0" y1="411.8" x2="674.0" y2="414.0" stroke="#333" stroke-width="1"/><line x1="667.0" y1="417.8" x2="674.0" y2="420.0" stroke="#333" stroke-width="1"/><line x1="667.0" y1="423.8" x2="674.0" y2="426.0" stroke="#333" stroke-width="1"/><line x1="667.0" y1="429.8" x2="674.0" y2="432.0" stroke="#333" stroke-width="1"/><line x1="684.5" y1="417.4" x2="691.5" y2="419.6" stroke="#333" stroke-width="1"/><line x1="684.5" y1="423.4" x2="691.5" y2="425.6" stroke="#333" stroke-width="1"/><line x1="684.5" y1="429.4" x2="691.5" y2="431.6" stroke="#333" stroke-width="1"/><line x1="684.5" y1="435.4" x2="691.5" y2="437.6" stroke="#333" stroke-width="1"/><line x1="374.0" y1="321.0" x2="381.0" y2="323.2" stroke="#333" stroke-width="1"/><line x1="374.0" y1="327.0" x2="381.0" y2="329.2" stroke="#333" stroke-width="1"/><line x1="374.0" y1="333.0" x2="381.0" y2="335.2" stroke="#333" stroke-width="1"/><line x1="374.0" y1="339.0" x2="381.0" y2="341.2" stroke="#333" stroke-width="1"/><line x1="391.5" y1="326.6" x2="398.5" y2="328.8" stroke="#333" stroke-width="1"/><line x1="391.5" y1="332.6" x2="398.5" y2="334.8" stroke="#333" stroke-width="1"/><line x1="391.5" y1="338.6" x2="398.5" y2="340.8" stroke="#333" stroke-width="1"/><line x1="391.5" y1="344.6" x2="398.5" y2="346.8" stroke="#333" stroke-width="1"/><line x1="409.0" y1="332.2" x2="416.0" y2="334.4" stroke="#333" stroke-width="1"/><line x1="409.0" y1="338.2" x2="416.0" y2="340.4" stroke="#333" stroke-width="1"/><line x1="409.0" y1="344.2" x2="416.0" y2="346.4" stroke="#333" stroke-width="1"/><line x1="409.0" y1="350.2" x2="416.0" y2="352.4" stroke="#333" stroke-width="1"/><polyline points="224,300 371,348 406,339.5 425,337.5 460,341" fill="none" stroke="#0e0e0e" stroke-width="2.2" /><path d="M460,341 L505,356 Q526,368 527.5,399 L672.5,445 L711,415" fill="none" stroke="#0e0e0e" stroke-width="2.2" /><polyline points="557.5,365 557.5,440" fill="none" stroke="#333" stroke-width="0.7" stroke-dasharray="4 3"/><polyline points="393.75,318 393.75,345" fill="none" stroke="#333" stroke-width="0.7" stroke-dasharray="4 3"/><polyline points="684.7,425 684.7,474" fill="none" stroke="#333" stroke-width="0.7" stroke-dasharray="4 3"/><polyline points="530,210 699,262" fill="none" stroke="#666" stroke-width="0.8" /><polyline points="529,213 553,224.5 682.6,270.6" fill="none" stroke="#777" stroke-width="0.8" /><polygon points="456,297 477.8,285.7 482,287.8 462.5,299.5" fill="#7a5a10" /><polyline points="456,297 471,282" fill="none" stroke="#3030c0" stroke-width="1" /><path d="M553,224.5 L672.8,268.8 Q650,276 632,298 Q606,305 591.6,327 L540,306 L471,282 Q485,274.7 511,252.4 C526,251 548,240 553,224.5 Z" fill="#ffffff" stroke="none" stroke-width="1" /><polyline points="471,282 540,306 591.6,327" fill="none" stroke="#666" stroke-width="0.8" /><path d="M672.8,268.8 Q650,276 632,298 Q606,305 591.6,327" fill="none" stroke="#777" stroke-width="0.8" /><polygon points="511,252.4 558.8,255.6 600,258.4 672.8,268.8 600,264 558.8,259.4 530,256" fill="#b8b8b8" stroke="#555" stroke-width=".7"/><polygon points="511,252.4 540,263 600,278 632,298 600,284.7 540,268.8 519,257" fill="#b8b8b8" stroke="#555" stroke-width=".7"/><polygon points="470.8,282.2 540,286.6 600,293 632,298 600,297.8 540,293 500,287" fill="#b8b8b8" stroke="#555" stroke-width=".7"/><rect x="529" y="253" width="3" height="3" fill="#111"/><rect x="550" y="255" width="3" height="3" fill="#111"/><rect x="487" y="282.5" width="3" height="3" fill="#111"/><rect x="509" y="284.5" width="3" height="3" fill="#111"/><polyline points="591.6,327 591.6,342" fill="none" stroke="#445" stroke-width="1.2" /><polyline points="632,297.8 632,312" fill="none" stroke="#445" stroke-width="1.2" /><polyline points="672.8,268.8 672.8,283" fill="none" stroke="#445" stroke-width="1.2" /><polyline points="468,289 468,300" fill="none" stroke="#445" stroke-width="1.2" /><rect x="488" y="288" width="3.5" height="19" fill="#111"/><polyline points="493,307 511,297" fill="none" stroke="#4040c0" stroke-width="0.8" /><polygon points="236.5,277 402,158 529,199 529,211 364,328 236.5,290" fill="#161616" /><polygon points="246,279.7 402.5,168.75 517,205 364,315" fill="#9b9b9b" /><polyline points="236.5,277.6 402,158.6 529,199.6" fill="none" stroke="#b4b4b4" stroke-width="1.6" /><polyline points="236.5,277 364,315.5 529,199" fill="none" stroke="#b8b8b8" stroke-width="1.3" /><polyline points="236.5,288.5 364,326.5 529,209.5" fill="none" stroke="#2a2a40" stroke-width="0.8" /><polygon points="236.5,290 364,328 364,331.5 236.5,293.8" fill="#8e6a12" /><polygon points="364,328 529,211 529,215 364,332" fill="#7e5c0c" /><polyline points="236.5,270 236.5,300" fill="none" stroke="#555" stroke-width="0.6" /><polygon points="587.5,360 728.75,257 855,297.5 855,306 712.5,408 587.5,368" fill="#161616" /><polygon points="591.8,361.4 726.4,263.2 849,302 712.5,399.5" fill="#9b9b9b" /><polyline points="587.5,360.6 728.75,257.6 855,298.1" fill="none" stroke="#b4b4b4" stroke-width="1.6" /><polyline points="587.5,360 712.5,400 855,297.5" fill="none" stroke="#b8b8b8" stroke-width="1.3" /><polygon points="587.5,368 712.5,408 711,415 586,375" fill="#8e6a12" /><rect x="754" y="378" width="2" height="4" fill="#222"/><rect x="795" y="349" width="2" height="4" fill="#222"/><rect x="307.7" y="329" width="4.6" height="21" rx="2" fill="#161616"/><rect x="347.2" y="344" width="4.6" height="19" rx="2" fill="#161616"/><rect x="404.7" y="341" width="4.6" height="36.5" rx="2" fill="#161616"/><rect x="458.7" y="342.5" width="4.6" height="36.5" rx="2" fill="#161616"/><rect x="468.7" y="345" width="4.6" height="19" rx="2" fill="#161616"/><rect x="504.7" y="359" width="4.6" height="35" rx="2" fill="#161616"/><rect x="528.7" y="401" width="4.6" height="15" rx="2" fill="#161616"/><rect x="578.2" y="416" width="4.6" height="20" rx="2" fill="#161616"/><rect x="669.7" y="445" width="4.6" height="21" rx="2" fill="#161616"/><polygon points="887.5,360 717.5,482.5 710,477.5 880,355" fill="none" stroke="#444" stroke-width=".7"/><circle cx="236" cy="378" r="3" fill="none" stroke="#444" stroke-width=".7"/><circle cx="391" cy="428" r="3" fill="none" stroke="#444" stroke-width=".7"/><circle cx="527" cy="469" r="3" fill="none" stroke="#444" stroke-width=".7"/><circle cx="557" cy="481" r="3" fill="none" stroke="#444" stroke-width=".7"/><circle cx="685" cy="521" r="3" fill="none" stroke="#444" stroke-width=".7"/><circle cx="730" cy="490" r="3" fill="none" stroke="#444" stroke-width=".7"/><circle cx="758" cy="470" r="3" fill="none" stroke="#444" stroke-width=".7"/><circle cx="792" cy="446" r="3" fill="none" stroke="#444" stroke-width=".7"/><circle cx="897" cy="367" r="3" fill="none" stroke="#444" stroke-width=".7"/><circle cx="903" cy="366" r="3" fill="none" stroke="#444" stroke-width=".7"/><circle cx="364" cy="418" r="3" fill="none" stroke="#444" stroke-width=".7"/><circle cx="203.75" cy="352.5" r="3" fill="none" stroke="#444" stroke-width=".7"/><polyline points="183.4,591.6 183.4,576" fill="none" stroke="#7070d0" stroke-width="1.2" /><polyline points="183.4,591.6 193,584" fill="none" stroke="#70d070" stroke-width="1" /><polyline points="183.4,591.6 198,596.3" fill="none" stroke="#d07080" stroke-width="1.2" /><text x="185" y="581" font-size="5" fill="#5050a0" font-family="Liberation Sans" font-weight="bold">z</text><text x="195" y="588" font-size="5" fill="#60c060" font-family="Liberation Sans">y</text><text x="199.5" y="601" font-size="6" fill="#d07080" font-family="Liberation Sans">x</text><polyline points="220,343.5 670,486" fill="none" stroke="#444" stroke-width="0.7" /><polyline points="205.5,342 678.5,492.5" fill="none" stroke="#e0e0e0" stroke-width="0.8" /><text x="280" y="363.5" font-size="4.2" fill="#333" font-family="Liberation Sans" transform="rotate(17.7 280 363.5)">1400</text><text x="358" y="387.5" font-size="4.2" fill="#333" font-family="Liberation Sans" transform="rotate(17.7 358 387.5)">6400</text><text x="441" y="414.5" font-size="4.2" fill="#333" font-family="Liberation Sans" transform="rotate(17.7 441 414.5)">1400</text><text x="520" y="439.5" font-size="4.2" fill="#333" font-family="Liberation Sans" transform="rotate(17.7 520 439.5)">6400</text><text x="600" y="465" font-size="4.2" fill="#333" font-family="Liberation Sans" transform="rotate(17.7 600 465)">1400</text><polyline points="346,383 357,376" fill="none" stroke="#444" stroke-width="0.7" /><polyline points="430,409 440,402" fill="none" stroke="#444" stroke-width="0.7" /><polyline points="512,435 522,428" fill="none" stroke="#444" stroke-width="0.7" /><polyline points="592,460 602,453" fill="none" stroke="#444" stroke-width="0.7" /><text x="796" y="428" font-size="4.2" fill="#333" font-family="Liberation Sans" transform="rotate(-35.7 796 428)">1400</text></svg>
</body></html>
